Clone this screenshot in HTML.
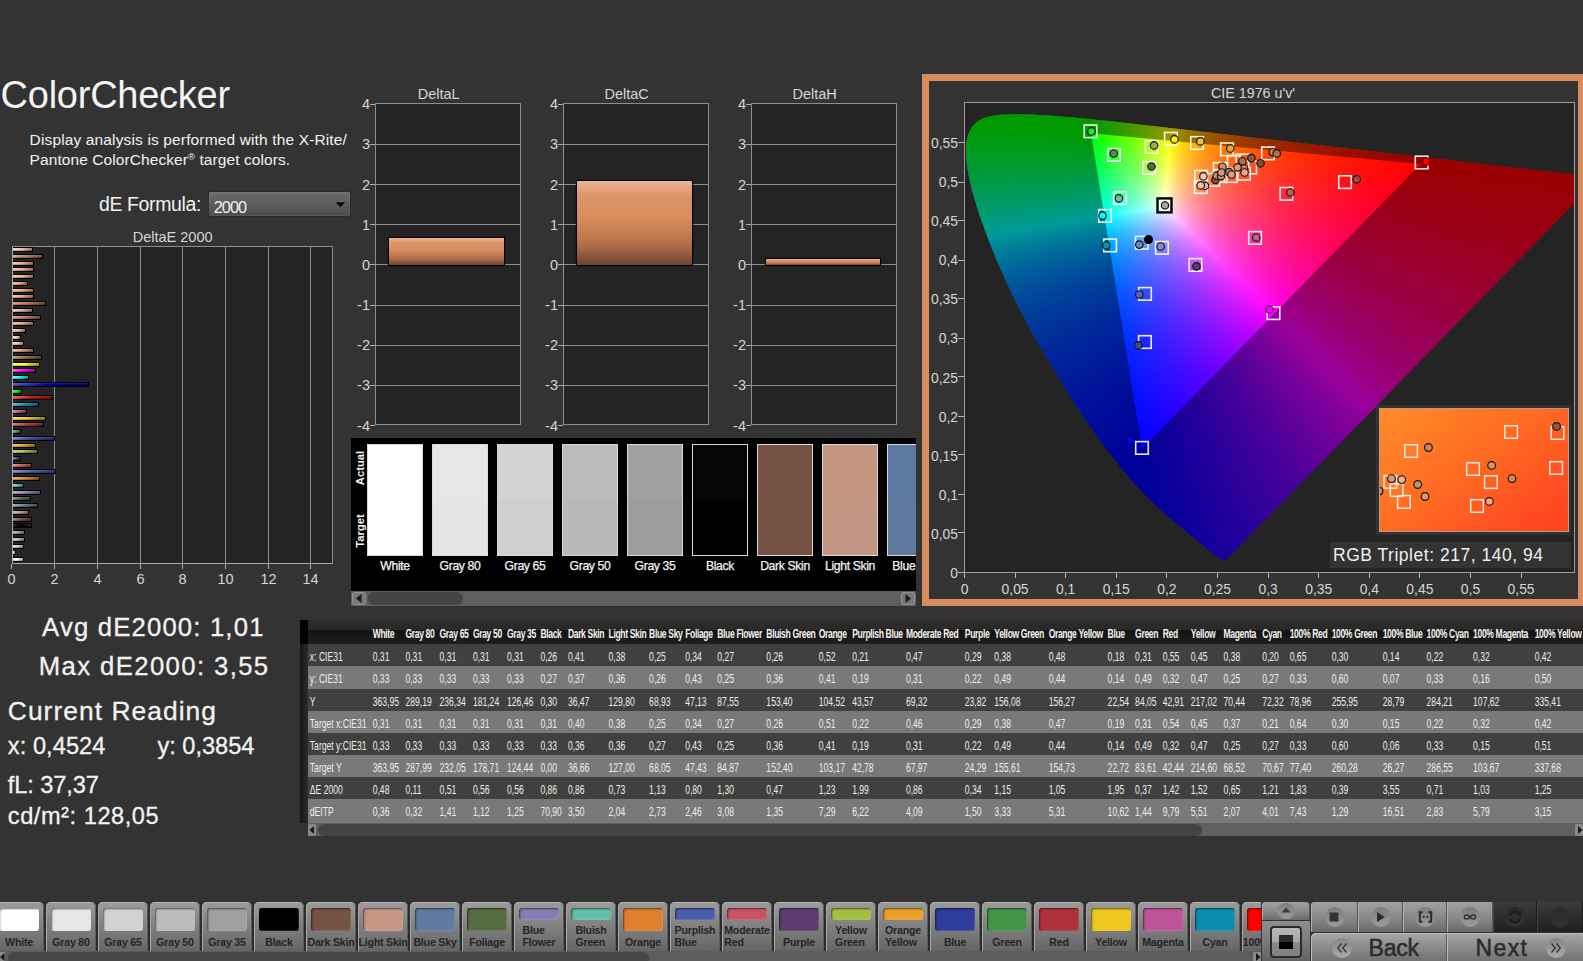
<!DOCTYPE html>
<html><head><meta charset="utf-8"><title>ColorChecker</title>
<style>
html,body{margin:0;padding:0;background:#333}
body{width:1583px;height:961px;overflow:hidden;position:relative;background:#333;font-family:"Liberation Sans",sans-serif;color:#f2f2f2}
.t{position:absolute;white-space:pre}
.b{position:absolute;box-sizing:border-box}
svg{position:absolute;overflow:visible}


.sw{position:absolute;top:6px;width:56px;height:112px;box-sizing:border-box;border:1px solid #d8d8d8}
.sw i{display:block;height:55px}
.swl{position:absolute;top:121px;width:80px;text-align:center;font-size:12.2px;line-height:14px;color:#f4f4f4;white-space:pre;letter-spacing:-.35px;-webkit-text-stroke:.25px #f4f4f4}


.cr{position:absolute;left:0;top:0;width:609px;height:469px}
.cr i{display:block;height:2px}
.ax{position:absolute;font-size:13.9px;line-height:14px;color:#d6d6d6;white-space:pre}


.tb{position:absolute;left:300px;top:620px;width:1969px;height:215px;transform:scaleX(0.655);transform-origin:0 0;font-size:13.1px;line-height:22px;color:#efefea;white-space:pre}
.tb div{position:absolute;left:0;width:100%;height:22px}
.tb span{position:absolute;top:0}
.tb .hd{height:24px;line-height:27.5px;letter-spacing:-.55px;background:linear-gradient(#2c2c2c,#292929 42%,#131313 44%,#1f1f1f);font-weight:700;color:#f4f4ee}
.tb .ra{background:#404040}.tb .rb{background:#797979}


.bs{position:absolute;left:0;top:902px;width:1261px;height:49px;overflow:hidden}
.bt{position:absolute;top:0;width:50px;height:49px;box-sizing:border-box;border-radius:5px 5px 0 0;background:linear-gradient(#9c9c9c,#8a8a8a 30%,#6e6e6e 85%,#646464);box-shadow:inset 1px 0 0 #a8a8a8,inset -1px 0 0 #5a5a5a,inset 0 1px 0 #b4b4b4}
.bt i{position:absolute;left:5px;top:6px;width:40px;height:23px;border-radius:3px;box-shadow:inset 1px 1px 2px rgba(0,0,0,.55),inset -1px -1px 1px rgba(255,255,255,.15)}
.bt i.s{height:12px}
.bt b{position:absolute;left:50%;transform:translateX(-50%);text-align:left;font-size:10.6px;line-height:12px;color:#242424;font-weight:700;letter-spacing:-.2px;white-space:pre}
.cb{position:absolute;box-sizing:border-box}
.cl{background:linear-gradient(#a2a2a2,#8c8c8c 45%,#6a6a6a);box-shadow:inset 1px 0 0 #b0b0b0,inset -1px 0 0 #555}
.cd{background:linear-gradient(#3c3c3c,#2c2c2c 50%,#202020);box-shadow:inset 1px 0 0 #444,inset -1px 0 0 #1a1a1a}
.ic{position:absolute;border-radius:50%}

</style></head><body>
<!-- left_panel -->
<div class="t" style="top:75.6px;font-size:38px;line-height:38px;color:#f4f4f4;letter-spacing:-0.25px;left:0.6px;">ColorChecker</div>
<div class="t" style="top:131.5px;font-size:15.5px;line-height:15.5px;color:#f2f2f2;letter-spacing:0.14px;left:29.6px;">Display analysis is performed with the X-Rite/</div>
<div class="t" style="top:152.2px;font-size:15.5px;line-height:15.5px;color:#f2f2f2;left:29.6px;letter-spacing:.08px;">Pantone ColorChecker<span style="font-size:9.5px;position:relative;top:-5px;letter-spacing:0">®</span> target colors.</div>
<div class="t" style="top:194.8px;font-size:19.5px;line-height:19.5px;color:#f2f2f2;letter-spacing:-0.39px;left:99.0px;">dE Formula:</div>
<div class="b" style="left:208px;top:191px;width:143px;height:26px;background:linear-gradient(#6c6c6c,#5e5e5e 45%,#4c4c4c);border:1px solid #2b2b2b;border-radius:2px;box-shadow:inset 0 0 0 1px rgba(255,255,255,.07)"></div>
<div class="t" style="top:199.3px;font-size:16.3px;line-height:16.3px;color:#f2f2f2;letter-spacing:-1.01px;left:213.8px;">2000</div>
<svg style="left:335px;top:201px" width="12" height="8"><path d="M.7 1.2h9.400L5.400 6.200z" fill="#080808"/></svg>
<div class="t" style="top:230.0px;font-size:14.5px;line-height:14.5px;color:#d6d6d6;left:-127.4px;width:600px;text-align:center;">DeltaE 2000</div>
<div class="b" style="left:12px;top:246px;width:321px;height:318px;background:#242424;border:1px solid #8e8e8e;border-bottom-color:#a8a8a8;border-left-color:#a8a8a8"></div>
<div class="b" style="left:54px;top:246px;width:1px;height:318px;background:#8e8e8e"></div>
<div class="b" style="left:97px;top:246px;width:1px;height:318px;background:#8e8e8e"></div>
<div class="b" style="left:140px;top:246px;width:1px;height:318px;background:#8e8e8e"></div>
<div class="b" style="left:182px;top:246px;width:1px;height:318px;background:#8e8e8e"></div>
<div class="b" style="left:225px;top:246px;width:1px;height:318px;background:#8e8e8e"></div>
<div class="b" style="left:268px;top:246px;width:1px;height:318px;background:#8e8e8e"></div>
<div class="b" style="left:310px;top:246px;width:1px;height:318px;background:#8e8e8e"></div>
<div class="b" style="left:11px;top:564px;width:1px;height:5px;background:#b0b0b0"></div>
<div class="t" style="top:572.3px;font-size:14.5px;line-height:14.5px;color:#d6d6d6;left:-288.5px;width:600px;text-align:center;">0</div>
<div class="b" style="left:54px;top:564px;width:1px;height:5px;background:#b0b0b0"></div>
<div class="t" style="top:572.3px;font-size:14.5px;line-height:14.5px;color:#d6d6d6;left:-245.5px;width:600px;text-align:center;">2</div>
<div class="b" style="left:97px;top:564px;width:1px;height:5px;background:#b0b0b0"></div>
<div class="t" style="top:572.3px;font-size:14.5px;line-height:14.5px;color:#d6d6d6;left:-202.5px;width:600px;text-align:center;">4</div>
<div class="b" style="left:140px;top:564px;width:1px;height:5px;background:#b0b0b0"></div>
<div class="t" style="top:572.3px;font-size:14.5px;line-height:14.5px;color:#d6d6d6;left:-159.5px;width:600px;text-align:center;">6</div>
<div class="b" style="left:182px;top:564px;width:1px;height:5px;background:#b0b0b0"></div>
<div class="t" style="top:572.3px;font-size:14.5px;line-height:14.5px;color:#d6d6d6;left:-117.5px;width:600px;text-align:center;">8</div>
<div class="b" style="left:225px;top:564px;width:1px;height:5px;background:#b0b0b0"></div>
<div class="t" style="top:572.3px;font-size:14.5px;line-height:14.5px;color:#d6d6d6;left:-74.5px;width:600px;text-align:center;">10</div>
<div class="b" style="left:268px;top:564px;width:1px;height:5px;background:#b0b0b0"></div>
<div class="t" style="top:572.3px;font-size:14.5px;line-height:14.5px;color:#d6d6d6;left:-31.5px;width:600px;text-align:center;">12</div>
<div class="b" style="left:310px;top:564px;width:1px;height:5px;background:#b0b0b0"></div>
<div class="t" style="top:572.3px;font-size:14.5px;line-height:14.5px;color:#d6d6d6;left:10.5px;width:600px;text-align:center;">14</div>
<div class="b" style="left:13px;top:247px;width:20px;height:5px;background:linear-gradient(rgba(255,255,255,.12),rgba(0,0,0,0) 50%,rgba(0,0,0,.3)),linear-gradient(90deg,#f8d3c1,#f4bca0 45%,#927160);border:1px solid #000;border-left:0"></div>
<div class="b" style="left:13px;top:254px;width:30px;height:5px;background:linear-gradient(rgba(255,255,255,.12),rgba(0,0,0,0) 50%,rgba(0,0,0,.3)),linear-gradient(90deg,#d2ac92,#b98058 45%,#6f4d35);border:1px solid #000;border-left:0"></div>
<div class="b" style="left:13px;top:261px;width:21px;height:5px;background:linear-gradient(rgba(255,255,255,.12),rgba(0,0,0,0) 50%,rgba(0,0,0,.3)),linear-gradient(90deg,#f4ccb7,#eeb090 45%,#8f6a56);border:1px solid #000;border-left:0"></div>
<div class="b" style="left:13px;top:267px;width:21px;height:5px;background:linear-gradient(rgba(255,255,255,.12),rgba(0,0,0,0) 50%,rgba(0,0,0,.3)),linear-gradient(90deg,#f1ccb8,#eab092 45%,#8c6a58);border:1px solid #000;border-left:0"></div>
<div class="b" style="left:13px;top:274px;width:21px;height:5px;background:linear-gradient(rgba(255,255,255,.12),rgba(0,0,0,0) 50%,rgba(0,0,0,.3)),linear-gradient(90deg,#f0d1bc,#e8b898 45%,#8b6e5b);border:1px solid #000;border-left:0"></div>
<div class="b" style="left:13px;top:281px;width:15px;height:5px;background:linear-gradient(rgba(255,255,255,.12),rgba(0,0,0,0) 50%,rgba(0,0,0,.3)),linear-gradient(90deg,#ffc0ab,#ff9e7e 45%,#995f4c);border:1px solid #000;border-left:0"></div>
<div class="b" style="left:13px;top:288px;width:21px;height:5px;background:linear-gradient(rgba(255,255,255,.12),rgba(0,0,0,0) 50%,rgba(0,0,0,.3)),linear-gradient(90deg,#f1c5b0,#eaa686 45%,#8c6450);border:1px solid #000;border-left:0"></div>
<div class="b" style="left:13px;top:294px;width:21px;height:5px;background:linear-gradient(rgba(255,255,255,.12),rgba(0,0,0,0) 50%,rgba(0,0,0,.3)),linear-gradient(90deg,#f7c3ab,#f2a27e 45%,#91614c);border:1px solid #000;border-left:0"></div>
<div class="b" style="left:13px;top:301px;width:33px;height:5px;background:linear-gradient(rgba(255,255,255,.12),rgba(0,0,0,0) 50%,rgba(0,0,0,.3)),linear-gradient(90deg,#d6a482,#c0733e 45%,#734525);border:1px solid #000;border-left:0"></div>
<div class="b" style="left:13px;top:308px;width:20px;height:5px;background:linear-gradient(rgba(255,255,255,.12),rgba(0,0,0,0) 50%,rgba(0,0,0,.3)),linear-gradient(90deg,#e9cebb,#ddb496 45%,#856c5a);border:1px solid #000;border-left:0"></div>
<div class="b" style="left:13px;top:315px;width:28px;height:5px;background:linear-gradient(rgba(255,255,255,.12),rgba(0,0,0,0) 50%,rgba(0,0,0,.3)),linear-gradient(90deg,#d2ac92,#b97f58 45%,#6f4c35);border:1px solid #000;border-left:0"></div>
<div class="b" style="left:13px;top:321px;width:21px;height:5px;background:linear-gradient(rgba(255,255,255,.12),rgba(0,0,0,0) 50%,rgba(0,0,0,.3)),linear-gradient(90deg,#ebc7b3,#e0a98a 45%,#866553);border:1px solid #000;border-left:0"></div>
<div class="b" style="left:13px;top:328px;width:13px;height:5px;background:linear-gradient(rgba(255,255,255,.12),rgba(0,0,0,0) 50%,rgba(0,0,0,.3)),linear-gradient(90deg,#ffd1bb,#ffb896 45%,#996e5a);border:1px solid #000;border-left:0"></div>
<div class="b" style="left:13px;top:335px;width:8px;height:5px;background:linear-gradient(rgba(255,255,255,.12),rgba(0,0,0,0) 50%,rgba(0,0,0,.3)),linear-gradient(90deg,#ffe0d1,#ffd0b8 45%,#997d6e);border:1px solid #000;border-left:0"></div>
<div class="b" style="left:13px;top:341px;width:11px;height:5px;background:linear-gradient(rgba(255,255,255,.12),rgba(0,0,0,0) 50%,rgba(0,0,0,.3)),linear-gradient(90deg,#ffdbc6,#ffc8a8 45%,#997865);border:1px solid #000;border-left:0"></div>
<div class="b" style="left:13px;top:348px;width:21px;height:5px;background:linear-gradient(rgba(255,255,255,.12),rgba(0,0,0,0) 50%,rgba(0,0,0,.3)),linear-gradient(90deg,#e6bfac,#d99c80 45%,#825e4d);border:1px solid #000;border-left:0"></div>
<div class="b" style="left:13px;top:355px;width:29px;height:5px;background:linear-gradient(rgba(255,255,255,.12),rgba(0,0,0,0) 50%,rgba(0,0,0,.3)),linear-gradient(90deg,#bd9e8b,#9a6a4c 45%,#5c402e);border:1px solid #000;border-left:0"></div>
<div class="b" style="left:13px;top:362px;width:27px;height:5px;background:linear-gradient(rgba(255,255,255,.12),rgba(0,0,0,0) 50%,rgba(0,0,0,.3)),linear-gradient(90deg,#ffff59,#ffff00 45%,#999900);border:1px solid #000;border-left:0"></div>
<div class="b" style="left:13px;top:368px;width:23px;height:5px;background:linear-gradient(rgba(255,255,255,.12),rgba(0,0,0,0) 50%,rgba(0,0,0,.3)),linear-gradient(90deg,#ff59ff,#ff00ff 45%,#990099);border:1px solid #000;border-left:0"></div>
<div class="b" style="left:13px;top:375px;width:16px;height:5px;background:linear-gradient(rgba(255,255,255,.12),rgba(0,0,0,0) 50%,rgba(0,0,0,.3)),linear-gradient(90deg,#59ffff,#00ffff 45%,#009999);border:1px solid #000;border-left:0"></div>
<div class="b" style="left:13px;top:382px;width:76px;height:5px;background:linear-gradient(rgba(255,255,255,.12),rgba(0,0,0,0) 50%,rgba(0,0,0,.3)),linear-gradient(90deg,#5959c6,#0000a8 45%,#000065);border:1px solid #000;border-left:0"></div>
<div class="b" style="left:13px;top:389px;width:9px;height:5px;background:linear-gradient(rgba(255,255,255,.12),rgba(0,0,0,0) 50%,rgba(0,0,0,.3)),linear-gradient(90deg,#59ff59,#00ff00 45%,#009900);border:1px solid #000;border-left:0"></div>
<div class="b" style="left:13px;top:395px;width:40px;height:5px;background:linear-gradient(rgba(255,255,255,.12),rgba(0,0,0,0) 50%,rgba(0,0,0,.3)),linear-gradient(90deg,#e06469,#d01018 45%,#7d0a0e);border:1px solid #000;border-left:0"></div>
<div class="b" style="left:13px;top:402px;width:26px;height:5px;background:linear-gradient(rgba(255,255,255,.12),rgba(0,0,0,0) 50%,rgba(0,0,0,.3)),linear-gradient(90deg,#60bdd1,#0a9ab8 45%,#065c6e);border:1px solid #000;border-left:0"></div>
<div class="b" style="left:13px;top:409px;width:14px;height:5px;background:linear-gradient(rgba(255,255,255,.12),rgba(0,0,0,0) 50%,rgba(0,0,0,.3)),linear-gradient(90deg,#d990bd,#c4549a 45%,#76325c);border:1px solid #000;border-left:0"></div>
<div class="b" style="left:13px;top:416px;width:33px;height:5px;background:linear-gradient(rgba(255,255,255,.12),rgba(0,0,0,0) 50%,rgba(0,0,0,.3)),linear-gradient(90deg,#f5db6e,#f0c820 45%,#907813);border:1px solid #000;border-left:0"></div>
<div class="b" style="left:13px;top:422px;width:31px;height:5px;background:linear-gradient(rgba(255,255,255,.12),rgba(0,0,0,0) 50%,rgba(0,0,0,.3)),linear-gradient(90deg,#cd7f85,#b23a44 45%,#6b2329);border:1px solid #000;border-left:0"></div>
<div class="b" style="left:13px;top:429px;width:8px;height:5px;background:linear-gradient(rgba(255,255,255,.12),rgba(0,0,0,0) 50%,rgba(0,0,0,.3)),linear-gradient(90deg,#8bbc8d,#4c9850 45%,#2e5b30);border:1px solid #000;border-left:0"></div>
<div class="b" style="left:13px;top:436px;width:42px;height:5px;background:linear-gradient(rgba(255,255,255,.12),rgba(0,0,0,0) 50%,rgba(0,0,0,.3)),linear-gradient(90deg,#7f89c1,#3a4aa0 45%,#232c60);border:1px solid #000;border-left:0"></div>
<div class="b" style="left:13px;top:443px;width:23px;height:5px;background:linear-gradient(rgba(255,255,255,.12),rgba(0,0,0,0) 50%,rgba(0,0,0,.3)),linear-gradient(90deg,#f0c473,#e8a428 45%,#8b6218);border:1px solid #000;border-left:0"></div>
<div class="b" style="left:13px;top:449px;width:25px;height:5px;background:linear-gradient(rgba(255,255,255,.12),rgba(0,0,0,0) 50%,rgba(0,0,0,.3)),linear-gradient(90deg,#c4d685,#a4c044 45%,#627329);border:1px solid #000;border-left:0"></div>
<div class="b" style="left:13px;top:456px;width:8px;height:5px;background:linear-gradient(rgba(255,255,255,.12),rgba(0,0,0,0) 50%,rgba(0,0,0,.3)),linear-gradient(90deg,#9580a2,#5c3c70 45%,#372443);border:1px solid #000;border-left:0"></div>
<div class="b" style="left:13px;top:463px;width:19px;height:5px;background:linear-gradient(rgba(255,255,255,.12),rgba(0,0,0,0) 50%,rgba(0,0,0,.3)),linear-gradient(90deg,#de929c,#cc5866 45%,#7a353d);border:1px solid #000;border-left:0"></div>
<div class="b" style="left:13px;top:469px;width:43px;height:5px;background:linear-gradient(rgba(255,255,255,.12),rgba(0,0,0,0) 50%,rgba(0,0,0,.3)),linear-gradient(90deg,#8994c6,#4a5aa8 45%,#2c3665);border:1px solid #000;border-left:0"></div>
<div class="b" style="left:13px;top:476px;width:27px;height:5px;background:linear-gradient(rgba(255,255,255,.12),rgba(0,0,0,0) 50%,rgba(0,0,0,.3)),linear-gradient(90deg,#ebac78,#e08030 45%,#864d1d);border:1px solid #000;border-left:0"></div>
<div class="b" style="left:13px;top:483px;width:11px;height:5px;background:linear-gradient(rgba(255,255,255,.12),rgba(0,0,0,0) 50%,rgba(0,0,0,.3)),linear-gradient(90deg,#99d6c8,#62c0aa 45%,#3b7366);border:1px solid #000;border-left:0"></div>
<div class="b" style="left:13px;top:490px;width:28px;height:5px;background:linear-gradient(rgba(255,255,255,.12),rgba(0,0,0,0) 50%,rgba(0,0,0,.3)),linear-gradient(90deg,#b3afd1,#8a84b8 45%,#534f6e);border:1px solid #000;border-left:0"></div>
<div class="b" style="left:13px;top:496px;width:18px;height:5px;background:linear-gradient(rgba(255,255,255,.12),rgba(0,0,0,0) 50%,rgba(0,0,0,.3)),linear-gradient(90deg,#91a185,#566e44 45%,#344229);border:1px solid #000;border-left:0"></div>
<div class="b" style="left:13px;top:503px;width:25px;height:5px;background:linear-gradient(rgba(255,255,255,.12),rgba(0,0,0,0) 50%,rgba(0,0,0,.3)),linear-gradient(90deg,#97a9c0,#5f7a9e 45%,#39495f);border:1px solid #000;border-left:0"></div>
<div class="b" style="left:13px;top:510px;width:16px;height:5px;background:linear-gradient(rgba(255,255,255,.12),rgba(0,0,0,0) 50%,rgba(0,0,0,.3)),linear-gradient(90deg,#dabbae,#c69682 45%,#775a4e);border:1px solid #000;border-left:0"></div>
<div class="b" style="left:13px;top:517px;width:19px;height:5px;background:linear-gradient(rgba(255,255,255,.12),rgba(0,0,0,0) 50%,rgba(0,0,0,.3)),linear-gradient(90deg,#a58d82,#74503f 45%,#463026);border:1px solid #000;border-left:0"></div>
<div class="b" style="left:13px;top:523px;width:19px;height:5px;background:linear-gradient(rgba(255,255,255,.12),rgba(0,0,0,0) 50%,rgba(0,0,0,.3)),linear-gradient(90deg,#2a2a2a,#000 30%,#1a1a1a);border:1px solid #000;border-left:0"></div>
<div class="b" style="left:13px;top:530px;width:12px;height:5px;background:linear-gradient(rgba(255,255,255,.12),rgba(0,0,0,0) 50%,rgba(0,0,0,.3)),linear-gradient(90deg,#c1c1c1,#a0a0a0 45%,#606060);border:1px solid #000;border-left:0"></div>
<div class="b" style="left:13px;top:537px;width:12px;height:5px;background:linear-gradient(rgba(255,255,255,.12),rgba(0,0,0,0) 50%,rgba(0,0,0,.3)),linear-gradient(90deg,#d2d2d2,#bababa 45%,#707070);border:1px solid #000;border-left:0"></div>
<div class="b" style="left:13px;top:544px;width:11px;height:5px;background:linear-gradient(rgba(255,255,255,.12),rgba(0,0,0,0) 50%,rgba(0,0,0,.3)),linear-gradient(90deg,#e2e2e2,#d2d2d2 45%,#7e7e7e);border:1px solid #000;border-left:0"></div>
<div class="b" style="left:13px;top:550px;width:3px;height:5px;background:linear-gradient(rgba(255,255,255,.12),rgba(0,0,0,0) 50%,rgba(0,0,0,.3)),linear-gradient(90deg,#efefef,#e6e6e6 45%,#8a8a8a);border:1px solid #000;border-left:0"></div>
<div class="b" style="left:13px;top:557px;width:11px;height:5px;background:linear-gradient(rgba(255,255,255,.12),rgba(0,0,0,0) 50%,rgba(0,0,0,.3)),linear-gradient(90deg,#ffffff,#ffffff 45%,#999999);border:1px solid #000;border-left:0"></div>
<div class="t" style="top:615.0px;font-size:25.7px;line-height:25.7px;color:#f2f2f2;letter-spacing:1.17px;left:42.1px;-webkit-text-stroke:.3px #f2f2f2;">Avg dE2000: 1,01</div>
<div class="t" style="top:654.1px;font-size:25.7px;line-height:25.7px;color:#f2f2f2;letter-spacing:1.39px;left:38.8px;-webkit-text-stroke:.3px #f2f2f2;">Max dE2000: 3,55</div>
<div class="t" style="top:698.1px;font-size:26.4px;line-height:26.4px;color:#f2f2f2;letter-spacing:1.04px;left:7.8px;-webkit-text-stroke:.3px #f2f2f2;">Current Reading</div>
<div class="t" style="top:734.6px;font-size:23.6px;line-height:23.6px;color:#f2f2f2;letter-spacing:0.07px;left:7.8px;-webkit-text-stroke:.3px #f2f2f2;">x: 0,4524</div>
<div class="t" style="top:734.6px;font-size:23.6px;line-height:23.6px;color:#f2f2f2;left:157.4px;-webkit-text-stroke:.3px #f2f2f2;">y: 0,3854</div>
<div class="t" style="top:773.6px;font-size:23.6px;line-height:23.6px;color:#f2f2f2;letter-spacing:-0.09px;left:7.8px;-webkit-text-stroke:.3px #f2f2f2;">fL: 37,37</div>
<div class="t" style="top:805.4px;font-size:23.6px;line-height:23.6px;color:#f2f2f2;letter-spacing:0.55px;left:7.8px;-webkit-text-stroke:.3px #f2f2f2;">cd/m²: 128,05</div>
<!-- mid_panel -->
<div class="t" style="top:87.1px;font-size:14.5px;line-height:14.5px;color:#d6d6d6;left:138.7px;width:600px;text-align:center;">DeltaL</div>
<div class="b" style="left:375px;top:103px;width:146px;height:322px;background:#242424;border:1px solid #8e8e8e"></div>
<div class="b" style="left:370px;top:425px;width:5px;height:1px;background:#b0b0b0"></div>
<div class="t" style="top:418.5px;font-size:14.5px;line-height:14.5px;color:#d6d6d6;left:-230.0px;width:600px;text-align:right;">-4</div>
<div class="b" style="left:375px;top:385px;width:146px;height:1px;background:#8e8e8e"></div>
<div class="b" style="left:370px;top:385px;width:5px;height:1px;background:#b0b0b0"></div>
<div class="t" style="top:378.3px;font-size:14.5px;line-height:14.5px;color:#d6d6d6;left:-230.0px;width:600px;text-align:right;">-3</div>
<div class="b" style="left:375px;top:345px;width:146px;height:1px;background:#8e8e8e"></div>
<div class="b" style="left:370px;top:345px;width:5px;height:1px;background:#b0b0b0"></div>
<div class="t" style="top:338.1px;font-size:14.5px;line-height:14.5px;color:#d6d6d6;left:-230.0px;width:600px;text-align:right;">-2</div>
<div class="b" style="left:375px;top:305px;width:146px;height:1px;background:#8e8e8e"></div>
<div class="b" style="left:370px;top:305px;width:5px;height:1px;background:#b0b0b0"></div>
<div class="t" style="top:298.0px;font-size:14.5px;line-height:14.5px;color:#d6d6d6;left:-230.0px;width:600px;text-align:right;">-1</div>
<div class="b" style="left:375px;top:264px;width:146px;height:1px;background:#8e8e8e"></div>
<div class="b" style="left:370px;top:264px;width:5px;height:1px;background:#b0b0b0"></div>
<div class="t" style="top:257.8px;font-size:14.5px;line-height:14.5px;color:#d6d6d6;left:-230.0px;width:600px;text-align:right;">0</div>
<div class="b" style="left:375px;top:224px;width:146px;height:1px;background:#8e8e8e"></div>
<div class="b" style="left:370px;top:224px;width:5px;height:1px;background:#b0b0b0"></div>
<div class="t" style="top:217.7px;font-size:14.5px;line-height:14.5px;color:#d6d6d6;left:-230.0px;width:600px;text-align:right;">1</div>
<div class="b" style="left:375px;top:184px;width:146px;height:1px;background:#8e8e8e"></div>
<div class="b" style="left:370px;top:184px;width:5px;height:1px;background:#b0b0b0"></div>
<div class="t" style="top:177.5px;font-size:14.5px;line-height:14.5px;color:#d6d6d6;left:-230.0px;width:600px;text-align:right;">2</div>
<div class="b" style="left:375px;top:144px;width:146px;height:1px;background:#8e8e8e"></div>
<div class="b" style="left:370px;top:144px;width:5px;height:1px;background:#b0b0b0"></div>
<div class="t" style="top:137.3px;font-size:14.5px;line-height:14.5px;color:#d6d6d6;left:-230.0px;width:600px;text-align:right;">3</div>
<div class="b" style="left:370px;top:104px;width:5px;height:1px;background:#b0b0b0"></div>
<div class="t" style="top:97.2px;font-size:14.5px;line-height:14.5px;color:#d6d6d6;left:-230.0px;width:600px;text-align:right;">4</div>
<div class="b" style="left:388px;top:237px;width:117px;height:29px;background:linear-gradient(#eab496,#dd9468 18%,#d98c5e 45%,#b4704a 75%,#6c4434);border:1px solid #000;box-shadow:0 0 1px #000"></div>
<div class="t" style="top:87.1px;font-size:14.5px;line-height:14.5px;color:#d6d6d6;left:326.7px;width:600px;text-align:center;">DeltaC</div>
<div class="b" style="left:563px;top:103px;width:146px;height:322px;background:#242424;border:1px solid #8e8e8e"></div>
<div class="b" style="left:558px;top:425px;width:5px;height:1px;background:#b0b0b0"></div>
<div class="t" style="top:418.5px;font-size:14.5px;line-height:14.5px;color:#d6d6d6;left:-42.0px;width:600px;text-align:right;">-4</div>
<div class="b" style="left:563px;top:385px;width:146px;height:1px;background:#8e8e8e"></div>
<div class="b" style="left:558px;top:385px;width:5px;height:1px;background:#b0b0b0"></div>
<div class="t" style="top:378.3px;font-size:14.5px;line-height:14.5px;color:#d6d6d6;left:-42.0px;width:600px;text-align:right;">-3</div>
<div class="b" style="left:563px;top:345px;width:146px;height:1px;background:#8e8e8e"></div>
<div class="b" style="left:558px;top:345px;width:5px;height:1px;background:#b0b0b0"></div>
<div class="t" style="top:338.1px;font-size:14.5px;line-height:14.5px;color:#d6d6d6;left:-42.0px;width:600px;text-align:right;">-2</div>
<div class="b" style="left:563px;top:305px;width:146px;height:1px;background:#8e8e8e"></div>
<div class="b" style="left:558px;top:305px;width:5px;height:1px;background:#b0b0b0"></div>
<div class="t" style="top:298.0px;font-size:14.5px;line-height:14.5px;color:#d6d6d6;left:-42.0px;width:600px;text-align:right;">-1</div>
<div class="b" style="left:563px;top:264px;width:146px;height:1px;background:#8e8e8e"></div>
<div class="b" style="left:558px;top:264px;width:5px;height:1px;background:#b0b0b0"></div>
<div class="t" style="top:257.8px;font-size:14.5px;line-height:14.5px;color:#d6d6d6;left:-42.0px;width:600px;text-align:right;">0</div>
<div class="b" style="left:563px;top:224px;width:146px;height:1px;background:#8e8e8e"></div>
<div class="b" style="left:558px;top:224px;width:5px;height:1px;background:#b0b0b0"></div>
<div class="t" style="top:217.7px;font-size:14.5px;line-height:14.5px;color:#d6d6d6;left:-42.0px;width:600px;text-align:right;">1</div>
<div class="b" style="left:563px;top:184px;width:146px;height:1px;background:#8e8e8e"></div>
<div class="b" style="left:558px;top:184px;width:5px;height:1px;background:#b0b0b0"></div>
<div class="t" style="top:177.5px;font-size:14.5px;line-height:14.5px;color:#d6d6d6;left:-42.0px;width:600px;text-align:right;">2</div>
<div class="b" style="left:563px;top:144px;width:146px;height:1px;background:#8e8e8e"></div>
<div class="b" style="left:558px;top:144px;width:5px;height:1px;background:#b0b0b0"></div>
<div class="t" style="top:137.3px;font-size:14.5px;line-height:14.5px;color:#d6d6d6;left:-42.0px;width:600px;text-align:right;">3</div>
<div class="b" style="left:558px;top:104px;width:5px;height:1px;background:#b0b0b0"></div>
<div class="t" style="top:97.2px;font-size:14.5px;line-height:14.5px;color:#d6d6d6;left:-42.0px;width:600px;text-align:right;">4</div>
<div class="b" style="left:576px;top:180px;width:117px;height:86px;background:linear-gradient(#eab496,#dd9468 18%,#d98c5e 45%,#b4704a 75%,#6c4434);border:1px solid #000;box-shadow:0 0 1px #000"></div>
<div class="t" style="top:87.1px;font-size:14.5px;line-height:14.5px;color:#d6d6d6;left:514.7px;width:600px;text-align:center;">DeltaH</div>
<div class="b" style="left:751px;top:103px;width:146px;height:322px;background:#242424;border:1px solid #8e8e8e"></div>
<div class="b" style="left:746px;top:425px;width:5px;height:1px;background:#b0b0b0"></div>
<div class="t" style="top:418.5px;font-size:14.5px;line-height:14.5px;color:#d6d6d6;left:146.0px;width:600px;text-align:right;">-4</div>
<div class="b" style="left:751px;top:385px;width:146px;height:1px;background:#8e8e8e"></div>
<div class="b" style="left:746px;top:385px;width:5px;height:1px;background:#b0b0b0"></div>
<div class="t" style="top:378.3px;font-size:14.5px;line-height:14.5px;color:#d6d6d6;left:146.0px;width:600px;text-align:right;">-3</div>
<div class="b" style="left:751px;top:345px;width:146px;height:1px;background:#8e8e8e"></div>
<div class="b" style="left:746px;top:345px;width:5px;height:1px;background:#b0b0b0"></div>
<div class="t" style="top:338.1px;font-size:14.5px;line-height:14.5px;color:#d6d6d6;left:146.0px;width:600px;text-align:right;">-2</div>
<div class="b" style="left:751px;top:305px;width:146px;height:1px;background:#8e8e8e"></div>
<div class="b" style="left:746px;top:305px;width:5px;height:1px;background:#b0b0b0"></div>
<div class="t" style="top:298.0px;font-size:14.5px;line-height:14.5px;color:#d6d6d6;left:146.0px;width:600px;text-align:right;">-1</div>
<div class="b" style="left:751px;top:264px;width:146px;height:1px;background:#8e8e8e"></div>
<div class="b" style="left:746px;top:264px;width:5px;height:1px;background:#b0b0b0"></div>
<div class="t" style="top:257.8px;font-size:14.5px;line-height:14.5px;color:#d6d6d6;left:146.0px;width:600px;text-align:right;">0</div>
<div class="b" style="left:751px;top:224px;width:146px;height:1px;background:#8e8e8e"></div>
<div class="b" style="left:746px;top:224px;width:5px;height:1px;background:#b0b0b0"></div>
<div class="t" style="top:217.7px;font-size:14.5px;line-height:14.5px;color:#d6d6d6;left:146.0px;width:600px;text-align:right;">1</div>
<div class="b" style="left:751px;top:184px;width:146px;height:1px;background:#8e8e8e"></div>
<div class="b" style="left:746px;top:184px;width:5px;height:1px;background:#b0b0b0"></div>
<div class="t" style="top:177.5px;font-size:14.5px;line-height:14.5px;color:#d6d6d6;left:146.0px;width:600px;text-align:right;">2</div>
<div class="b" style="left:751px;top:144px;width:146px;height:1px;background:#8e8e8e"></div>
<div class="b" style="left:746px;top:144px;width:5px;height:1px;background:#b0b0b0"></div>
<div class="t" style="top:137.3px;font-size:14.5px;line-height:14.5px;color:#d6d6d6;left:146.0px;width:600px;text-align:right;">3</div>
<div class="b" style="left:746px;top:104px;width:5px;height:1px;background:#b0b0b0"></div>
<div class="t" style="top:97.2px;font-size:14.5px;line-height:14.5px;color:#d6d6d6;left:146.0px;width:600px;text-align:right;">4</div>
<div class="b" style="left:765px;top:258px;width:116px;height:8px;background:linear-gradient(#eab496,#dd9468 18%,#d98c5e 45%,#b4704a 75%,#6c4434);border:1px solid #000;box-shadow:0 0 1px #000"></div>
<div class="b" style="left:351px;top:438px;width:565px;height:153px;background:#000;overflow:hidden"><div class="sw" style="left:16px"><i style="background:#ffffff"></i><i style="background:#ffffff"></i></div><div class="swl" style="left:4px">White</div><div class="sw" style="left:81px"><i style="background:#e7e5e6"></i><i style="background:#e4e4e4"></i></div><div class="swl" style="left:69px">Gray 80</div><div class="sw" style="left:146px"><i style="background:#d3d3d4"></i><i style="background:#cfcfcf"></i></div><div class="swl" style="left:134px">Gray 65</div><div class="sw" style="left:211px"><i style="background:#bbbbbd"></i><i style="background:#b8b8b8"></i></div><div class="swl" style="left:199px">Gray 50</div><div class="sw" style="left:276px"><i style="background:#a1a1a2"></i><i style="background:#9d9d9d"></i></div><div class="swl" style="left:264px">Gray 35</div><div class="sw" style="left:341px"><i style="background:#040506"></i><i style="background:#000000"></i></div><div class="swl" style="left:329px">Black</div><div class="sw" style="left:406px"><i style="background:#745143"></i><i style="background:#735244"></i></div><div class="swl" style="left:394px">Dark Skin</div><div class="sw" style="left:471px"><i style="background:#c4957f"></i><i style="background:#c29682"></i></div><div class="swl" style="left:459px">Light Skin</div><div class="sw" style="left:536px"><i style="background:#5c7a9f"></i><i style="background:#5f7a9e"></i></div><div class="swl" style="left:524px">Blue Sky</div><div class="t" style="left:-21.5px;top:23.2px;width:60px;height:14px;line-height:14px;font-size:11.3px;font-weight:700;text-align:center;transform:rotate(-90deg);color:#f4f4f4">Actual</div><div class="t" style="left:-21.5px;top:86px;width:60px;height:14px;line-height:14px;font-size:11.3px;font-weight:700;text-align:center;transform:rotate(-90deg);color:#f4f4f4">Target</div></div>
<div class="b" style="left:351px;top:591px;width:565px;height:15px;background:#5f5f5f"><div class="b" style="left:0.5px;top:1px;width:14px;height:13px;background:#787878;border:1px solid #949494;border-radius:2.5px"></div><svg style="left:4px;top:3px" width="8" height="9"><path d="M6.500 0v9L1 4.500z" fill="#1c1c1c"/></svg><div class="b" style="left:549.5px;top:1px;width:14px;height:13px;background:#787878;border:1px solid #949494;border-radius:2.5px"></div><svg style="left:553px;top:3px" width="8" height="9"><path d="M1.500 0v9L7 4.500z" fill="#1c1c1c"/></svg><div class="b" style="left:17.4px;top:1.4px;width:95px;height:12.200px;background:#454545;border-radius:6.100px"></div></div>
<!-- cie_panel -->
<div class="b" style="left:922px;top:74px;width:663px;height:532px;border:7px solid #d98c5e;background:#333"></div>
<div class="t" style="top:85.9px;font-size:14.3px;line-height:14.3px;color:#d6d6d6;left:953.0px;width:600px;text-align:center;">CIE 1976 u'v'</div>
<div class="b" style="left:964px;top:102px;width:611px;height:471px;background:#242424;border:1px solid #9c9c9c"></div>
<div class="b" style="left:965px;top:103px;width:609px;height:469px;overflow:hidden"><div class="cr" style="clip-path:polygon(261.4px 456.4px,256.7px 456.6px,254.3px 455.6px,252.1px 454.1px,250.1px 452.6px,247.6px 450.7px,245.7px 449.1px,243.5px 447.3px,241.1px 445.3px,238.5px 443.0px,235.6px 440.5px,232.4px 437.9px,230.7px 436.5px,228.9px 434.9px,226.9px 433.3px,224.9px 431.7px,222.8px 429.9px,220.5px 428.0px,218.2px 426.1px,215.8px 424.1px,213.3px 422.1px,210.7px 419.9px,208.0px 417.7px,205.2px 415.3px,202.3px 412.7px,199.2px 410.0px,196.1px 407.2px,192.8px 404.2px,189.4px 401.0px,185.9px 397.7px,182.4px 394.2px,178.6px 390.4px,174.7px 386.3px,170.5px 381.7px,166.0px 376.7px,161.2px 371.0px,156.2px 364.9px,150.8px 358.3px,145.3px 351.2px,139.7px 343.8px,133.8px 335.9px,127.9px 327.5px,121.8px 318.8px,115.5px 309.5px,109.2px 299.8px,102.8px 289.8px,96.3px 279.3px,89.8px 268.6px,83.3px 257.8px,76.8px 246.7px,70.5px 235.5px,64.2px 224.3px,58.1px 213.0px,52.3px 201.7px,46.8px 190.5px,41.6px 179.5px,36.8px 168.7px,32.2px 158.2px,28.0px 147.9px,24.0px 138.0px,20.4px 128.4px,17.1px 119.3px,14.1px 110.7px,11.5px 102.5px,9.2px 94.9px,7.2px 87.7px,5.5px 81.0px,4.1px 74.7px,3.0px 68.8px,2.1px 63.4px,1.5px 58.3px,1.1px 53.6px,0.9px 49.3px,0.9px 45.3px,1.2px 41.6px,1.6px 38.1px,2.3px 34.9px,3.1px 31.9px,4.2px 29.2px,5.4px 26.7px,6.8px 24.4px,8.4px 22.4px,10.1px 20.6px,11.9px 19.0px,13.9px 17.6px,16.0px 16.4px,18.2px 15.3px,20.5px 14.5px,22.9px 13.7px,25.4px 13.2px,27.9px 12.7px,33.2px 12.0px,38.7px 11.6px,44.4px 11.4px,50.2px 11.3px,55.9px 11.3px,61.7px 11.4px,64.6px 11.5px,67.5px 11.6px,70.5px 11.7px,73.5px 11.9px,76.6px 12.0px,79.7px 12.2px,82.8px 12.4px,86.0px 12.6px,89.3px 12.9px,92.6px 13.1px,95.9px 13.4px,99.3px 13.7px,102.8px 14.0px,106.3px 14.3px,109.9px 14.6px,113.6px 15.0px,117.3px 15.3px,121.1px 15.7px,125.0px 16.1px,128.9px 16.5px,133.0px 17.0px,137.1px 17.4px,141.3px 17.8px,145.6px 18.3px,150.0px 18.8px,154.4px 19.3px,159.0px 19.8px,163.7px 20.3px,168.4px 20.8px,173.3px 21.4px,178.2px 21.9px,183.3px 22.5px,188.4px 23.1px,193.7px 23.7px,199.0px 24.3px,204.5px 24.9px,210.1px 25.5px,215.8px 26.2px,221.5px 26.8px,227.4px 27.5px,233.4px 28.2px,239.5px 28.9px,245.7px 29.6px,252.1px 30.4px,258.5px 31.1px,265.0px 31.9px,271.6px 32.6px,278.3px 33.4px,285.1px 34.2px,292.0px 35.0px,299.0px 35.8px,306.0px 36.6px,313.2px 37.4px,320.4px 38.2px,327.6px 39.1px,335.0px 39.9px,342.3px 40.8px,349.8px 41.6px,357.2px 42.5px,364.6px 43.3px,372.0px 44.2px,379.3px 45.0px,386.5px 45.9px,393.6px 46.7px,400.8px 47.5px,407.9px 48.3px,415.0px 49.1px,422.0px 49.9px,429.0px 50.8px,436.0px 51.6px,442.7px 52.3px,449.3px 53.1px,455.8px 53.8px,462.1px 54.5px,468.2px 55.3px,474.3px 55.9px,480.1px 56.6px,485.9px 57.3px,491.5px 57.9px,496.9px 58.6px,502.2px 59.2px,507.3px 59.7px,512.2px 60.3px,516.9px 60.9px,521.5px 61.4px,526.0px 61.9px,530.2px 62.4px,534.4px 62.9px,538.3px 63.3px,542.2px 63.8px,545.9px 64.2px,549.5px 64.6px,552.9px 65.0px,556.3px 65.4px,559.5px 65.8px,562.7px 66.1px,565.7px 66.5px,568.8px 66.8px,571.7px 67.2px,574.5px 67.5px,577.2px 67.8px,582.4px 68.4px,587.2px 69.0px,591.7px 69.5px,595.8px 70.0px,599.6px 70.4px,602.9px 70.8px,605.8px 71.1px,609.7px 71.6px,613.1px 71.9px,616.0px 72.3px,619.0px 72.6px,622.1px 73.0px,625.0px 73.3px,628.0px 73.7px,634.9px 73.9px)"><i></i><i></i><i></i><i></i><i></i><i style="background:linear-gradient(90deg,#00ff00 33px,#00ff00 76px)"></i><i style="background:linear-gradient(90deg,#00ff00 21px,#00ff00 103px)"></i><i style="background:linear-gradient(90deg,#00ff00 15px,#01ff00 124px)"></i><i style="background:linear-gradient(90deg,#00ff00 12px,#00ff00 124px,#30ff00 143px)"></i><i style="background:linear-gradient(90deg,#00ff00 9px,#00ff00 124px,#2fff00 143px,#64ff00 162px)"></i><i style="background:linear-gradient(90deg,#00ff03 7px,#00ff00 28px,#00ff00 124px,#47ff00 152px,#9cff00 180px)"></i><i style="background:linear-gradient(90deg,#00ff07 6px,#00ff00 49px,#00ff00 125px,#33ff00 145px,#66ff00 163px,#9cff00 180px,#d7ff00 197px)"></i><i style="background:linear-gradient(90deg,#00ff0a 4px,#00ff00 70px,#00ff00 125px,#38ff00 147px,#75ff00 168px,#b7ff00 188px,#ffff00 207px,#ffe200 215px)"></i><i style="background:linear-gradient(90deg,#00ff0e 3px,#00ff00 91px,#00ff00 125px,#32ff00 145px,#75ff00 168px,#b8ff00 188px,#ffff00 207px,#ffd400 219px,#ffb200 232px)"></i><i style="background:linear-gradient(90deg,#00ff12 2px,#00ff00 126px,#3aff00 148px,#75ff00 168px,#b4ff00 187px,#fffe00 207px,#ffdd00 216px,#ffc000 226px,#ffa500 237px,#ff8c00 250px)"></i><i style="background:linear-gradient(90deg,#00ff15 2px,#00ff02 126px,#37ff00 147px,#75ff00 168px,#b1ff00 186px,#fffd00 207px,#ffd300 219px,#ffae00 233px,#ff8d00 249px,#ff7200 267px)"></i><i style="background:linear-gradient(90deg,#00ff19 1px,#00ff06 126px,#33ff02 146px,#75ff00 168px,#b8ff00 188px,#feff00 206px,#ffc900 222px,#ffa000 239px,#ff7b00 260px,#ff5d00 284px)"></i><i style="background:linear-gradient(90deg,#00ff1c 1px,#01ff0b 127px,#3bff06 149px,#78ff02 169px,#b9ff00 188px,#feff00 206px,#ffde00 215px,#ffc300 224px,#ffaa00 234px,#ff9300 245px,#ff6b00 271px,#ff4b00 302px)"></i><i style="background:linear-gradient(90deg,#00ff20 0px,#00ff10 127px,#38ff0c 148px,#77ff07 169px,#b9ff03 188px,#ffff00 206px,#ffdd00 215px,#ffbc00 226px,#ffa200 237px,#ff8900 250px,#ff7200 265px,#ff5f00 281px,#ff3d00 319px)"></i><i style="background:linear-gradient(90deg,#00ff23 0px,#00ff14 127px,#34ff11 147px,#74ff0d 168px,#b5ff09 187px,#fcff04 205px,#fffe04 206px,#ffd300 218px,#ffb400 229px,#ff9700 242px,#ff7f00 256px,#ff6800 272px,#ff5400 291px,#ff3200 336px)"></i><i style="background:linear-gradient(90deg,#00ff27 0px,#01ff19 128px,#3aff16 149px,#77ff12 169px,#b9ff0e 188px,#fdff0a 205px,#fffd0a 206px,#ffd206 218px,#ffb102 230px,#ff9200 244px,#ff7600 261px,#ff5e00 280px,#ff4a00 301px,#ff3700 326px,#ff2700 354px)"></i><i style="background:linear-gradient(90deg,#00ff2b 0px,#00ff1e 128px,#39ff1b 149px,#77ff18 169px,#baff14 188px,#fdff10 205px,#ffd10b 218px,#ffad07 231px,#ff8c03 247px,#ff7000 265px,#ff5700 286px,#ff4200 310px,#ff2f00 338px,#ff1f00 371px)"></i><i style="background:linear-gradient(90deg,#00ff2e -1px,#00ff23 128px,#33ff20 147px,#73ff1d 168px,#b6ff1a 187px,#feff17 205px,#ffd010 218px,#ffa80b 233px,#ff8606 250px,#ff6902 270px,#ff5000 293px,#ff3a00 320px,#ff2800 351px,#ff1800 388px)"></i><i style="background:linear-gradient(90deg,#00ff32 -1px,#01ff28 129px,#3bff25 150px,#76ff23 169px,#baff20 188px,#ffff1d 205px,#ffcf16 218px,#ffa50f 234px,#ff8209 252px,#ff6305 274px,#ff4a01 299px,#ff3400 329px,#ff2100 364px,#ff1100 406px)"></i><i style="background:linear-gradient(90deg,#00ff36 -1px,#00ff2d 129px,#3aff2b 150px,#76ff28 169px,#b7ff26 187px,#fffe23 205px,#ffcb1a 219px,#ffa113 235px,#ff7c0d 255px,#ff5e07 278px,#ff4403 305px,#ff2e00 338px,#ff1b00 377px,#ff0b00 423px)"></i><i style="background:linear-gradient(90deg,#00ff39 -1px,#00ff32 129px,#34ff30 148px,#73ff2e 168px,#b3ff2c 186px,#fffd2a 205px,#ffe224 212px,#ffc71f 220px,#ff9c17 237px,#ff770f 258px,#ff5709 283px,#ff3d04 313px,#ff2800 348px,#ff1500 390px,#ff0600 440px)"></i><i style="background:linear-gradient(90deg,#00ff3d 0px,#01ff37 130px,#39ff36 150px,#76ff34 169px,#afff33 185px,#fdff31 204px,#fffd30 205px,#ffe12a 212px,#ffc625 220px,#ffae1f 229px,#ff971a 239px,#ff7212 261px,#ff530c 287px,#ff3806 319px,#ff2301 357px,#ff1000 403px,#ff0100 458px)"></i><i style="background:linear-gradient(90deg,#00ff41 0px,#00ff3c 130px,#39ff3b 150px,#72ff3a 168px,#acff39 184px,#feff38 204px,#fffc37 205px,#ffdc2f 213px,#ffc329 221px,#ff941e 240px,#ff6e15 263px,#ff4d0d 292px,#ff3207 328px,#ff1c02 371px,#ff0700 433px,#ff0000 475px)"></i><i style="background:linear-gradient(90deg,#00ff45 0px,#00ff42 130px,#35ff41 149px,#76ff40 169px,#b8ff3f 187px,#ffff3e 204px,#ffdf36 212px,#ffc22f 221px,#ffa728 231px,#ff9122 241px,#ff6918 266px,#ff490f 296px,#ff2c08 337px,#ff1502 387px,#ff0000 459px,#ff0000 493px)"></i><i style="background:linear-gradient(90deg,#00ff49 0px,#01ff47 131px,#3bff47 151px,#79ff46 170px,#b8ff46 187px,#ffff45 204px,#ffde3c 212px,#ffc134 221px,#ffa62d 231px,#ff8f26 242px,#ff661b 268px,#ff4411 301px,#ff2609 346px,#ff0f02 403px,#ff0000 458px,#ff0000 510px)"></i><i style="background:linear-gradient(90deg,#00ff4d 0px,#00ff4d 131px,#3aff4d 151px,#75ff4d 169px,#b4ff4c 186px,#fffe4c 204px,#ffda41 213px,#ffbd39 222px,#ffa331 232px,#ff8a29 244px,#ff611d 271px,#ff4013 305px,#ff210a 355px,#ff0903 419px,#ff0000 456px,#ff0000 527px)"></i><i style="background:linear-gradient(90deg,#00ff51 0px,#00ff52 131px,#33ff52 149px,#71ff53 168px,#b1ff53 185px,#fffd53 204px,#ffd947 213px,#ffbc3e 222px,#ffa035 233px,#ff872d 245px,#ff7026 259px,#ff5d1f 274px,#ff3b15 310px,#ff1c0a 365px,#ff0403 438px,#ff0001 454px,#ff0000 545px)"></i><i style="background:linear-gradient(90deg,#00ff55 1px,#01ff58 132px,#39ff58 151px,#75ff59 169px,#adff5a 184px,#fdff5b 203px,#fffc5a 204px,#ffd84d 213px,#ffb843 223px,#ff9d39 234px,#ff8330 247px,#ff6d28 261px,#ff5922 277px,#ff3716 315px,#ff180b 374px,#ff0003 451px,#ff0000 562px)"></i><i style="background:linear-gradient(90deg,#00ff59 1px,#00ff5d 132px,#38ff5f 151px,#71ff60 168px,#b5ff61 186px,#feff62 203px,#fffb61 204px,#ffd754 213px,#ffb748 223px,#ff993d 235px,#ff8034 248px,#ff692b 263px,#ff5624 279px,#ff3318 319px,#ff160d 376px,#ff0005 450px,#ff0000 518px,#ff0000 580px)"></i><i style="background:linear-gradient(90deg,#00ff5d 1px,#00ff63 132px,#35ff65 150px,#74ff66 169px,#b5ff68 186px,#ffff6a 203px,#ffda5b 212px,#ffb64d 223px,#ff9942 235px,#ff7f38 248px,#ff682f 263px,#ff5427 280px,#ff3119 322px,#ff150f 377px,#ff0006 448px,#ff0000 539px,#ff0000 597px)"></i><i style="background:linear-gradient(90deg,#00ff61 2px,#01ff69 133px,#3aff6b 152px,#78ff6d 170px,#b6ff6f 186px,#fffe71 203px,#ffd962 212px,#ffb553 223px,#ff9847 235px,#ff7d3b 249px,#ff6632 264px,#ff5129 282px,#ff2e1b 325px,#ff1411 378px,#ff0008 446px,#ff0000 560px,#ff0000 611px)"></i><i style="background:linear-gradient(90deg,#00ff65 2px,#00ff6f 133px,#3aff71 152px,#74ff74 169px,#b2ff76 185px,#fffd78 203px,#ffd868 212px,#ffb559 223px,#ff974c 235px,#ff7c40 249px,#ff6536 264px,#ff502d 282px,#ff2e1e 325px,#ff1413 377px,#ff000a 444px,#ff0000 611px)"></i><i style="background:linear-gradient(90deg,#00ff69 3px,#00ff75 133px,#33ff77 150px,#70ff7a 168px,#aeff7d 184px,#fdff81 202px,#fffc7f 203px,#ffd76e 212px,#ffb45e 223px,#ff9650 235px,#ff7b44 249px,#ff643a 264px,#ff4f30 282px,#ff2d20 325px,#ff1415 377px,#ff000c 442px,#ff0000 611px)"></i><i style="background:linear-gradient(90deg,#00ff6d 3px,#01ff7b 134px,#39ff7e 152px,#74ff81 169px,#b6ff85 186px,#feff89 202px,#fffb87 203px,#ffd675 212px,#ffb364 223px,#ff9555 235px,#ff7a48 249px,#ff633d 264px,#ff4e33 282px,#ff2c23 325px,#ff1317 376px,#ff000d 440px,#ff0001 611px)"></i><i style="background:linear-gradient(90deg,#00ff72 3px,#00ff82 134px,#3bff85 153px,#77ff89 170px,#bbff8d 187px,#ffff91 202px,#ffd97d 211px,#ffb56b 222px,#ff965b 234px,#ff7c4e 247px,#ff6543 262px,#ff5038 280px,#ff3d2e 300px,#ff2d26 323px,#ff1419 374px,#ff000f 438px,#ff0002 611px)"></i><i style="background:linear-gradient(90deg,#00ff76 4px,#00ff88 134px,#34ff8b 151px,#73ff90 169px,#b3ff94 185px,#fffe98 202px,#ffd884 211px,#ffb471 222px,#ff9560 234px,#ff7b53 247px,#ff6446 262px,#ff4f3b 280px,#ff3c31 300px,#ff2c29 323px,#ff131b 373px,#ff0011 436px,#ff0003 611px)"></i><i style="background:linear-gradient(90deg,#00ff7b 4px,#00ff8e 134px,#30ff92 150px,#6fff97 168px,#afff9b 184px,#fffda0 202px,#ffd78b 211px,#ffb377 222px,#ff9466 234px,#ff7b57 247px,#ff634a 262px,#ff4e3e 280px,#ff3c34 300px,#ff2b2b 323px,#ff131e 372px,#ff0013 434px,#ff0004 611px)"></i><i style="background:linear-gradient(90deg,#00ff7f 5px,#00ff95 135px,#39ff9a 153px,#73ff9e 169px,#afffa3 184px,#fdffa9 201px,#fffca8 202px,#ffd692 211px,#ffb27c 222px,#ff936b 234px,#ff7a5c 247px,#ff634e 262px,#ff4d42 280px,#ff3b37 300px,#ff2b2e 323px,#ff1320 371px,#ff0015 432px,#ff0005 611px)"></i><i style="background:linear-gradient(90deg,#00ff83 5px,#00ff9b 135px,#35ffa0 152px,#72ffa6 169px,#b8ffac 186px,#feffb2 201px,#fffbb0 202px,#ffd598 211px,#ffb182 222px,#ff9270 234px,#ff7960 247px,#ff6252 262px,#ff4c45 280px,#ff3a3a 300px,#ff2a30 323px,#ff1322 370px,#ff0017 430px,#ff0006 611px)"></i><i style="background:linear-gradient(90deg,#00ff88 6px,#00ff94 76px,#00ffa2 135px,#2effa7 150px,#6effad 168px,#b4ffb4 185px,#ffffbb 201px,#fffbb8 202px,#ffd49f 211px,#ffb088 222px,#ff9175 234px,#ff7865 247px,#ff6156 262px,#ff4c49 280px,#ff393d 300px,#ff2933 323px,#ff1224 370px,#ff0019 428px,#ff0007 611px)"></i><i style="background:linear-gradient(90deg,#00ff8d 6px,#00ff9a 77px,#01ffa9 136px,#3bffaf 154px,#76ffb5 170px,#b8ffbc 186px,#ffffc3 201px,#ffd7a9 210px,#ffb190 221px,#ff927c 233px,#ff786a 246px,#ff615b 261px,#ff4c4d 279px,#ff2a36 321px,#ff1327 368px,#ff001b 426px,#ff0010 507px,#ff0008 611px)"></i><i style="background:linear-gradient(90deg,#00ff91 7px,#00ff9f 77px,#00ffb0 136px,#37ffb6 153px,#76ffbd 170px,#b4ffc4 185px,#fffecc 201px,#ffd6b0 210px,#ffb096 221px,#ff9181 233px,#ff786f 246px,#ff605f 261px,#ff4b50 279px,#ff2939 321px,#ff1229 367px,#ff001d 424px,#ff0011 506px,#ff0009 611px)"></i><i style="background:linear-gradient(90deg,#00ff96 8px,#00ffa5 78px,#00ffb7 136px,#2fffbd 151px,#71ffc5 169px,#b0ffcc 184px,#fcffd5 200px,#fffdd4 201px,#ffd5b7 210px,#ffaf9d 221px,#ff9086 233px,#ff7774 246px,#ff5f63 261px,#ff4a54 279px,#ff283c 321px,#ff122c 366px,#ff001f 422px,#ff0013 505px,#ff000a 611px)"></i><i style="background:linear-gradient(90deg,#00ff9b 8px,#00ffab 79px,#01ffbe 137px,#36ffc5 153px,#71ffcd 169px,#acffd4 183px,#fdffdf 200px,#fffcdc 201px,#ffd4bf 210px,#ffaea3 221px,#ff8f8c 233px,#ff7678 246px,#ff5f67 261px,#ff4957 279px,#ff283e 321px,#ff122e 366px,#ff0021 421px,#ff0014 504px,#ff000b 610px)"></i><i style="background:linear-gradient(90deg,#00ffa0 9px,#00ffb1 79px,#00ffc5 137px,#35ffcd 153px,#71ffd5 169px,#b5ffde 185px,#feffe8 200px,#fffbe5 201px,#ffd3c6 210px,#ffada9 221px,#ff8e91 233px,#ff757d 246px,#ff5e6b 261px,#ff485b 279px,#ff2741 321px,#ff1130 365px,#ff0023 419px,#ff0016 501px,#ff000c 608px)"></i><i style="background:linear-gradient(90deg,#00ffa5 9px,#00ffb7 79px,#00ffcd 137px,#31ffd4 152px,#75ffde 170px,#b5ffe7 185px,#fffff2 200px,#ffd6d1 209px,#ffb2b4 219px,#ff929a 231px,#ff7785 244px,#ff5f72 259px,#ff4b61 276px,#ff3852 296px,#ff2845 318px,#ff1233 362px,#ff0025 417px,#ff0017 499px,#ff000d 606px)"></i><i style="background:linear-gradient(90deg,#00ffaa 10px,#00ffbd 80px,#01ffd5 138px,#37ffdd 154px,#74ffe6 170px,#b6fff0 185px,#fffefb 200px,#ffd4d8 209px,#ffb1bb 219px,#ff91a0 231px,#ff768a 244px,#ff5e76 259px,#ff4a65 276px,#ff3755 296px,#ff2748 318px,#ff1136 362px,#ff0027 415px,#ff0019 498px,#ff000e 605px)"></i><i style="background:linear-gradient(90deg,#00ffaf 11px,#00ffc3 81px,#00ffdc 138px,#33ffe4 153px,#6cffee 168px,#9ffff6 180px,#d8ffff 192px,#fff8ff 201px,#ffcfdc 210px,#ffadbf 220px,#ff8ea4 232px,#ff738d 245px,#ff5c79 260px,#ff4867 277px,#ff3658 297px,#ff264a 319px,#ff1138 361px,#ff0029 413px,#ff001b 496px,#ff000f 603px)"></i><i style="background:linear-gradient(90deg,#00ffb4 11px,#00ffca 81px,#00ffe4 138px,#19ffe8 146px,#48fff0 159px,#9fffff 180px,#ffedff 203px,#ffc7dd 212px,#ffa6c0 222px,#ff88a5 234px,#ff6f8f 247px,#ff597b 262px,#ff4468 280px,#ff244b 322px,#ff103a 362px,#ff002b 411px,#ff001c 494px,#ff0011 601px)"></i><i style="background:linear-gradient(90deg,#00ffb9 12px,#00ffd0 82px,#01ffec 139px,#35fff5 154px,#6bffff 168px,#ffe2ff 205px,#ffbede 214px,#ff9dbf 225px,#ff81a5 237px,#ff698f 250px,#ff547b 265px,#ff4069 283px,#ff214c 325px,#ff0f3c 363px,#ff002e 409px,#ff001e 491px,#ff0012 599px)"></i><i style="background:linear-gradient(90deg,#00ffbe 12px,#00ffd7 82px,#00fff4 139px,#3cffff 156px,#9cecff 182px,#ffd8ff 207px,#ffb7df 216px,#ff96c0 227px,#ff7ca6 239px,#ff6591 252px,#ff507d 267px,#ff3d6b 285px,#ff1f4e 328px,#ff0e3e 364px,#ff0030 407px,#ff0020 489px,#ff0013 597px)"></i><i style="background:linear-gradient(90deg,#00ffc4 13px,#00ffdd 82px,#00fffc 139px,#10ffff 144px,#76eaff 173px,#ffcfff 209px,#ffafdf 218px,#ff90c1 229px,#ff77a8 241px,#ff5f91 255px,#ff4c7e 270px,#ff3a6c 288px,#ff1d4f 330px,#ff0d3f 365px,#ff0032 405px,#ff0021 487px,#ff0014 595px)"></i><i style="background:linear-gradient(90deg,#00ffc9 14px,#00ffe2 78px,#00ffff 131px,#01faff 140px,#7ce0ff 176px,#ffc6ff 211px,#ffa5dd 221px,#ff8bc2 231px,#ff72a9 243px,#ff5c92 257px,#ff497f 272px,#ff376d 290px,#ff1b50 333px,#ff0035 403px,#ff0023 485px,#ff0015 593px)"></i><i style="background:linear-gradient(90deg,#00ffcf 15px,#00ffe5 71px,#00ffff 119px,#00f2ff 140px,#7cd8ff 177px,#ffbdff 213px,#ff9ede 223px,#ff83c1 234px,#ff6ca9 246px,#ff5693 260px,#ff4580 275px,#ff346e 293px,#ff1851 336px,#ff0037 401px,#ff0025 483px,#ff0017 591px)"></i><i style="background:linear-gradient(90deg,#00ffd4 15px,#00ffe8 64px,#00ffff 107px,#00ebff 140px,#74d2ff 176px,#ffb5ff 215px,#ff97de 225px,#ff7dc2 236px,#ff67aa 248px,#ff5394 262px,#ff4180 278px,#ff316f 296px,#ff1652 339px,#ff003a 399px,#ff0027 481px,#ff0018 589px)"></i><i style="background:linear-gradient(90deg,#00ffda 16px,#00ffff 96px,#01e3ff 141px,#7ec9ff 180px,#ffadff 217px,#ff94e2 226px,#ff7cc8 236px,#ff68b1 247px,#ff569d 259px,#ff367a 288px,#ff1d5d 325px,#ff0d4b 358px,#ff003c 397px,#ff0028 479px,#ff0019 587px)"></i><i style="background:linear-gradient(90deg,#00ffe0 17px,#00ffff 84px,#00dcff 141px,#7dc2ff 181px,#ffa6ff 219px,#ff8de3 228px,#ff77c9 238px,#ff64b2 249px,#ff519d 262px,#ff337a 291px,#ff1b5e 327px,#ff0d4e 358px,#ff003f 395px,#ff002a 477px,#ff001b 585px)"></i><i style="background:linear-gradient(90deg,#00ffe5 17px,#00ffff 72px,#00d6ff 141px,#76bcff 180px,#ff9fff 221px,#ff87e3 230px,#ff72ca 240px,#ff5fb3 251px,#ff4d9e 264px,#ff317c 293px,#ff1960 329px,#ff0042 393px,#ff002c 475px,#ff001c 583px)"></i><i style="background:linear-gradient(90deg,#00ffeb 18px,#00ffff 60px,#01cfff 142px,#7cb4ff 183px,#ff98ff 223px,#ff82e4 232px,#ff6dcb 242px,#ff5bb5 253px,#ff4a9f 266px,#ff2e7d 295px,#ff1761 331px,#ff0044 391px,#ff002e 473px,#ff001d 581px)"></i><i style="background:linear-gradient(90deg,#00fff1 19px,#00ffff 48px,#00c9ff 142px,#7caeff 184px,#ff91ff 225px,#ff7ce4 234px,#ff69cc 244px,#ff57b6 255px,#ff47a1 268px,#ff2c7e 297px,#ff1662 333px,#ff0047 389px,#ff0030 471px,#ff001f 579px)"></i><i style="background:linear-gradient(90deg,#00fff7 20px,#00ffff 36px,#00c4ff 142px,#78a9ff 184px,#ff8bff 227px,#ff75e2 237px,#ff63ca 247px,#ff44a2 270px,#ff2980 299px,#ff1464 334px,#ff004a 387px,#ff0032 468px,#ff0020 577px)"></i><i style="background:linear-gradient(90deg,#00fffd 20px,#00e8ff 68px,#01beff 143px,#7ea2ff 187px,#ff85ff 229px,#ff70e3 239px,#ff5ecb 249px,#ff40a3 272px,#ff2781 301px,#ff1366 336px,#ff004c 386px,#ff0034 467px,#ff0021 575px)"></i><i style="background:linear-gradient(90deg,#00faff 21px,#00b9ff 143px,#7d9cff 188px,#ff7fff 231px,#ff6be3 241px,#ff5acc 251px,#ff3da4 274px,#ff2583 303px,#ff1167 338px,#ff004f 384px,#ff0036 465px,#ff0023 573px)"></i><i style="background:linear-gradient(90deg,#00f4ff 22px,#00b4ff 143px,#7798ff 187px,#ff79ff 233px,#ff66e4 243px,#ff56cd 253px,#ff3aa5 276px,#ff2384 305px,#ff0f68 340px,#ff0053 381px,#ff003f 434px,#ff0030 496px,#ff0024 572px)"></i><i style="background:linear-gradient(90deg,#00eeff 23px,#01aeff 144px,#7c92ff 190px,#ff74ff 235px,#ff62e4 245px,#ff52ce 255px,#ff38a7 278px,#ff2186 306px,#ff0e6a 341px,#ff0056 379px,#ff0041 434px,#ff0032 495px,#ff0025 570px)"></i><i style="background:linear-gradient(90deg,#00e9ff 23px,#00aaff 144px,#7b8dff 191px,#ff6fff 237px,#ff4ece 257px,#ff35a8 280px,#ff1f86 309px,#ff0d6c 343px,#ff0058 378px,#ff0043 434px,#ff0033 495px,#ff0027 568px)"></i><i style="background:linear-gradient(90deg,#00e4ff 24px,#00a5ff 144px,#7889ff 191px,#ff6aff 239px,#ff4bcf 259px,#ff32a9 282px,#ff1d89 310px,#ff0c6e 344px,#ff005b 376px,#ff0044 435px,#ff0035 494px,#ff0028 566px)"></i><i style="background:linear-gradient(90deg,#00deff 25px,#01a0ff 145px,#7086ff 189px,#ff65ff 241px,#ff63fd 242px,#ff46ce 262px,#ff2ea8 285px,#ff1a89 313px,#ff0a6e 347px,#ff005f 374px,#ff0046 436px,#ff0036 494px,#ff002a 564px)"></i><i style="background:linear-gradient(90deg,#00d9ff 26px,#009cff 145px,#7082ff 190px,#ff60ff 243px,#ff5ffd 244px,#ff42cf 264px,#ff2caa 287px,#ff188a 315px,#ff0970 348px,#ff0062 372px,#ff0047 436px,#ff0038 493px,#ff002b 562px)"></i><i style="background:linear-gradient(90deg,#00d4ff 27px,#0098ff 145px,#6d7eff 190px,#fe5cff 245px,#ff5afd 246px,#ff3fcf 266px,#ff29ab 289px,#ff178b 317px,#ff0771 350px,#ff0065 370px,#ff0049 437px,#ff0039 493px,#ff002d 560px)"></i><i style="background:linear-gradient(90deg,#00cfff 27px,#0194ff 146px,#7279ff 193px,#ff56fd 248px,#ff3cd0 268px,#ff27ac 291px,#ff158d 318px,#ff0673 351px,#ff0068 368px,#ff004a 437px,#ff003b 492px,#ff002e 558px)"></i><i style="background:linear-gradient(90deg,#00cbff 28px,#0090ff 146px,#7275ff 194px,#ff52fd 250px,#ff39d1 270px,#ff24ac 293px,#ff138e 320px,#ff0574 353px,#ff006c 366px,#ff005b 399px,#ff004c 437px,#ff003d 491px,#ff0030 556px)"></i><i style="background:linear-gradient(90deg,#00c6ff 29px,#008cff 146px,#6f72ff 194px,#ff4efd 252px,#ff37d3 271px,#ff23af 294px,#ff1290 321px,#ff0376 354px,#ff006f 364px,#ff0060 392px,#ff004e 437px,#ff003e 491px,#ff0031 554px)"></i><i style="background:linear-gradient(90deg,#00c2ff 30px,#0188ff 147px,#716dff 196px,#ff4afd 254px,#ff34d4 273px,#ff20b0 296px,#ff1091 323px,#ff0278 355px,#ff0062 393px,#ff0050 437px,#ff0040 490px,#ff0033 552px)"></i><i style="background:linear-gradient(90deg,#00bdff 31px,#0085ff 147px,#7369ff 198px,#ff46fd 256px,#ff31d4 275px,#ff1eb1 298px,#ff0e92 325px,#ff0179 357px,#ff0063 394px,#ff0051 438px,#ff0042 489px,#ff0034 550px)"></i><i style="background:linear-gradient(90deg,#00b9ff 32px,#0082ff 147px,#7166ff 198px,#ff42fd 258px,#ff2ed5 277px,#ff1cb1 300px,#ff0d93 327px,#ff007b 358px,#ff0065 395px,#ff0053 438px,#ff0043 489px,#ff0036 548px)"></i><i style="background:linear-gradient(90deg,#00b5ff 32px,#017eff 148px,#7362ff 200px,#ff3ffd 260px,#ff2bd5 279px,#ff1ab2 302px,#ff0b95 328px,#ff007c 359px,#ff0067 395px,#ff0054 438px,#ff0045 488px,#ff0038 546px)"></i><i style="background:linear-gradient(90deg,#00b1ff 33px,#007bff 148px,#725fff 201px,#ff3bfd 262px,#ff28d6 281px,#ff18b3 304px,#ff0a96 330px,#ff007d 361px,#ff0068 397px,#ff0056 438px,#ff0046 487px,#ff0039 544px)"></i><i style="background:linear-gradient(90deg,#00adff 34px,#0078ff 148px,#725cff 202px,#ff38fd 264px,#ff26d6 283px,#ff15b4 306px,#ff0897 332px,#ff0086 352px,#ff007f 362px,#ff006a 397px,#ff0058 438px,#ff0048 486px,#ff003b 542px)"></i><i style="background:linear-gradient(90deg,#00a9ff 35px,#0075ff 148px,#6d5aff 201px,#ff35fd 266px,#ff23d7 285px,#ff14b6 307px,#ff0a9f 327px,#ff008a 350px,#ff0081 363px,#ff006c 398px,#ff005a 438px,#ff003c 540px)"></i><i style="background:linear-gradient(90deg,#00a6ff 36px,#0072ff 149px,#7455ff 205px,#ff31fd 268px,#ff21d7 287px,#ff12b7 309px,#ff008f 348px,#ff0082 364px,#ff006d 399px,#ff005b 439px,#ff003e 539px)"></i><i style="background:linear-gradient(90deg,#00a2ff 37px,#006fff 149px,#7352ff 206px,#ff2efd 270px,#ff1ed8 289px,#ff10b8 311px,#ff0093 346px,#ff0083 366px,#ff006f 400px,#ff005d 439px,#ff0040 537px)"></i><i style="background:linear-gradient(90deg,#009eff 38px,#006cff 149px,#6f50ff 205px,#ff2bfd 272px,#ff1cd8 291px,#ff0eb8 313px,#ff0097 344px,#ff0085 367px,#ff0071 400px,#ff005e 439px,#ff0041 535px)"></i><i style="background:linear-gradient(90deg,#009bff 39px,#0169ff 150px,#754cff 209px,#ff28fd 274px,#ff19d9 293px,#ff0dba 314px,#ff009c 342px,#ff0087 368px,#ff0072 401px,#ff0060 439px,#ff0043 533px)"></i><i style="background:linear-gradient(90deg,#0098ff 39px,#0067ff 150px,#734aff 209px,#ff26fd 276px,#ff17d9 295px,#ff0bbb 316px,#ff00a1 340px,#ff0088 369px,#ff0074 402px,#ff0062 439px,#ff0045 531px)"></i><i style="background:linear-gradient(90deg,#0095ff 40px,#0064ff 150px,#7148ff 209px,#ff23fd 278px,#ff15da 297px,#ff09bc 318px,#ff00a5 338px,#ff008a 370px,#ff0076 402px,#ff0064 439px,#ff0047 529px)"></i><i style="background:linear-gradient(90deg,#0092ff 41px,#0162ff 151px,#7444ff 212px,#ff20fe 280px,#ff13dc 298px,#ff08be 319px,#ff00a9 337px,#ff008c 371px,#ff0077 403px,#ff0065 439px,#ff0049 527px)"></i><i style="background:linear-gradient(90deg,#008eff 42px,#005fff 151px,#7442ff 213px,#ff1dfe 282px,#ff11dc 300px,#ff06be 321px,#ff00ae 335px,#ff008d 372px,#ff0079 403px,#ff0068 438px,#ff004a 525px)"></i><i style="background:linear-gradient(90deg,#008bff 43px,#005dff 151px,#7240ff 213px,#ff1bfe 284px,#ff0fdd 302px,#ff04bf 323px,#ff00b3 333px,#ff008f 373px,#ff007b 403px,#ff0069 438px,#ff004c 523px)"></i><i style="background:linear-gradient(90deg,#0088ff 44px,#015aff 152px,#753cff 216px,#ff18fe 286px,#ff0ddd 304px,#ff03c1 324px,#ff00a7 347px,#ff0090 374px,#ff007d 404px,#ff006b 438px,#ff004e 521px)"></i><i style="background:linear-gradient(90deg,#0085ff 45px,#0058ff 152px,#753aff 217px,#ff16fe 288px,#ff0bdd 306px,#ff01c1 326px,#ff00a8 349px,#ff0092 375px,#ff007e 405px,#ff006d 438px,#ff0050 519px)"></i><i style="background:linear-gradient(90deg,#0083ff 46px,#0056ff 152px,#7139ff 216px,#ff14fe 290px,#ff09de 308px,#ff00c2 328px,#ff00a9 351px,#ff0094 376px,#ff0080 405px,#ff006f 438px,#ff0052 517px)"></i><i style="background:linear-gradient(90deg,#0080ff 47px,#0154ff 153px,#7735ff 220px,#ff11fe 292px,#ff07e0 309px,#ff00c4 329px,#ff00ab 352px,#ff0095 377px,#ff0071 438px,#ff0054 515px)"></i><i style="background:linear-gradient(90deg,#007dff 48px,#0052ff 153px,#7633ff 221px,#ff0ffe 294px,#ff00d0 322px,#ff00c4 331px,#ff00ac 353px,#ff0097 378px,#ff0072 438px,#ff0056 513px)"></i><i style="background:linear-gradient(90deg,#007aff 49px,#0050ff 153px,#7232ff 220px,#ff0dfe 296px,#ff00d6 320px,#ff00c5 333px,#ff00ad 355px,#ff0098 379px,#ff0075 437px,#ff0058 511px)"></i><i style="background:linear-gradient(90deg,#0078ff 50px,#014eff 154px,#762fff 223px,#ff0bfe 298px,#ff00db 319px,#ff00c7 334px,#ff00af 356px,#ff009a 380px,#ff0076 437px,#ff005a 509px)"></i><i style="background:linear-gradient(90deg,#0075ff 51px,#004cff 154px,#762dff 224px,#ff08fe 300px,#ff00e1 317px,#ff00c7 336px,#ff00b0 357px,#ff009b 381px,#ff0078 437px,#ff005c 507px)"></i><i style="background:linear-gradient(90deg,#0073ff 52px,#004aff 154px,#742bff 224px,#ff06fe 302px,#ff00e8 315px,#ff00c8 338px,#ff00b1 359px,#ff009d 382px,#ff007a 437px,#ff005e 506px)"></i><i style="background:linear-gradient(90deg,#0070ff 53px,#0148ff 155px,#7729ff 227px,#ff04fe 304px,#ff00ee 313px,#ff00c9 339px,#ff00b3 360px,#ff009e 383px,#ff007c 437px,#ff0060 504px)"></i><i style="background:linear-gradient(90deg,#006eff 54px,#0046ff 155px,#7727ff 228px,#ff02fe 306px,#ff00e2 323px,#ff00ca 341px,#ff00a0 384px,#ff007e 437px,#ff0062 502px)"></i><i style="background:linear-gradient(90deg,#006bff 55px,#0044ff 155px,#7525ff 228px,#ff00fe 308px,#ff00e2 325px,#ff00ca 343px,#ff00a1 385px,#ff007f 437px,#ff0064 500px)"></i><i style="background:linear-gradient(90deg,#0069ff 56px,#0142ff 156px,#7823ff 231px,#ff00fe 310px,#ff00e4 326px,#ff00cc 344px,#ff00a3 386px,#ff0082 436px,#ff0066 498px)"></i><i style="background:linear-gradient(90deg,#0067ff 57px,#0041ff 156px,#7721ff 232px,#f400ff 305px,#ff00fe 312px,#ff00e4 328px,#ff00ce 345px,#ff00a5 386px,#ff0084 436px,#ff0069 496px)"></i><i style="background:linear-gradient(90deg,#0065ff 58px,#003fff 156px,#7620ff 232px,#ed00ff 303px,#ff00fe 314px,#ff00e5 330px,#ff00ce 347px,#ff00a7 387px,#ff0086 435px,#ff006b 494px)"></i><i style="background:linear-gradient(90deg,#0062ff 59px,#013dff 157px,#711fff 230px,#e600ff 301px,#ff00fe 316px,#ff00e5 332px,#ff00cf 349px,#ff00a8 388px,#ff0088 435px,#ff006d 492px)"></i><i style="background:linear-gradient(90deg,#0060ff 60px,#003cff 157px,#6d1fff 229px,#df00ff 299px,#ff00fe 318px,#ff00d0 350px,#ff00aa 389px,#ff008a 435px,#ff006f 490px)"></i><i style="background:linear-gradient(90deg,#005eff 62px,#003aff 157px,#691eff 227px,#d900ff 297px,#ff00fe 320px,#ff00d2 351px,#ff00ac 389px,#ff008c 434px,#ff0072 488px)"></i><i style="background:linear-gradient(90deg,#005cff 63px,#0139ff 158px,#681dff 228px,#d300ff 295px,#ff00fe 322px,#ff00d2 353px,#ff00ad 390px,#ff008e 434px,#ff0074 486px)"></i><i style="background:linear-gradient(90deg,#005aff 64px,#0037ff 158px,#651cff 227px,#cd00ff 293px,#ff00fe 324px,#ff00d3 355px,#ff00af 391px,#ff0090 434px,#ff0077 484px)"></i><i style="background:linear-gradient(90deg,#0058ff 65px,#0036ff 158px,#611cff 225px,#c700ff 291px,#ff00fe 326px,#ff00d4 356px,#ff00b1 391px,#ff0093 433px,#ff0079 482px)"></i><i style="background:linear-gradient(90deg,#0056ff 66px,#0134ff 159px,#5f1bff 225px,#c100ff 289px,#ff00fe 328px,#ff00d6 357px,#ff00b2 392px,#ff0095 432px,#ff007b 480px)"></i><i style="background:linear-gradient(90deg,#0054ff 67px,#0033ff 159px,#5c1aff 224px,#bb00ff 287px,#ff00fe 330px,#ff00d6 359px,#ff00b4 393px,#ff0097 432px,#ff007e 478px)"></i><i style="background:linear-gradient(90deg,#0052ff 68px,#0032ff 159px,#581aff 222px,#b600ff 285px,#ff00fe 332px,#ff00d8 360px,#ff00b6 393px,#ff009a 431px,#ff0081 476px)"></i><i style="background:linear-gradient(90deg,#0050ff 69px,#0130ff 160px,#5719ff 222px,#b100ff 283px,#ff00fe 334px,#ff00d8 362px,#ff00b7 394px,#ff009b 431px,#ff0083 474px)"></i><i style="background:linear-gradient(90deg,#004eff 70px,#002fff 160px,#5418ff 221px,#ab00ff 281px,#ff00fe 336px,#ff00d9 363px,#ff00b9 395px,#ff009d 431px,#ff0085 473px)"></i><i style="background:linear-gradient(90deg,#004cff 72px,#002eff 160px,#5117ff 220px,#a600ff 279px,#ff00fe 338px,#ff00da 365px,#ff00bb 395px,#ff00a0 430px,#ff0088 471px)"></i><i style="background:linear-gradient(90deg,#004aff 73px,#012cff 161px,#a300ff 278px,#ff00fe 340px,#ff00db 366px,#ff00bd 396px,#ff00a2 430px,#ff008b 469px)"></i><i style="background:linear-gradient(90deg,#0049ff 74px,#002bff 161px,#9e00ff 276px,#ff00fe 342px,#ff00dd 367px,#ff00bf 396px,#ff00a5 429px,#ff008d 467px)"></i><i style="background:linear-gradient(90deg,#0047ff 75px,#002aff 161px,#9900ff 274px,#ff00fe 344px,#ff00dd 369px,#ff00c0 397px,#ff00a7 429px,#ff0090 465px)"></i><i style="background:linear-gradient(90deg,#0045ff 76px,#0128ff 162px,#9400ff 272px,#ff00fe 346px,#ff00df 370px,#ff00c2 397px,#ff00a9 428px,#ff0093 463px)"></i><i style="background:linear-gradient(90deg,#0044ff 77px,#0027ff 162px,#8f00ff 270px,#ff00fe 348px,#ff00df 372px,#ff00c4 398px,#ff00ab 428px,#ff0096 461px)"></i><i style="background:linear-gradient(90deg,#0042ff 78px,#0026ff 162px,#8b00ff 268px,#ff00fe 350px,#ff00e0 373px,#ff00c6 398px,#ff00ae 427px,#ff0099 459px)"></i><i style="background:linear-gradient(90deg,#0040ff 80px,#0125ff 163px,#8600ff 266px,#fe00ff 351px,#ff00e0 375px,#ff00c7 399px,#ff00b1 426px,#ff009c 457px)"></i><i style="background:linear-gradient(90deg,#003fff 81px,#0024ff 163px,#8200ff 264px,#fe00ff 353px,#ff00e1 377px,#ff00c9 400px,#ff009f 455px)"></i><i style="background:linear-gradient(90deg,#003dff 82px,#0023ff 163px,#7e00ff 262px,#fe00ff 355px,#ff00e2 378px,#ff00cb 400px,#ff00a2 453px)"></i><i style="background:linear-gradient(90deg,#003cff 83px,#0121ff 164px,#7a00ff 260px,#fe00ff 357px,#ff00cd 400px,#ff00a5 451px)"></i><i style="background:linear-gradient(90deg,#003aff 84px,#0021ff 164px,#7500ff 258px,#fe00ff 359px,#ff00cf 401px,#ff00a8 449px)"></i><i style="background:linear-gradient(90deg,#0038ff 86px,#0020ff 164px,#7100ff 256px,#fe00ff 361px,#ff00d1 401px,#ff00ab 447px)"></i><i style="background:linear-gradient(90deg,#0037ff 87px,#011eff 165px,#6e00ff 254px,#fe00ff 363px,#ff00d2 402px,#ff00af 445px)"></i><i style="background:linear-gradient(90deg,#0036ff 88px,#001dff 165px,#6a00ff 252px,#fe00ff 365px,#ff00d5 402px,#ff00b2 443px)"></i><i style="background:linear-gradient(90deg,#0034ff 89px,#001cff 165px,#6600ff 250px,#fe00ff 367px,#ff00d7 402px,#ff00b5 441px)"></i><i style="background:linear-gradient(90deg,#0033ff 90px,#011bff 166px,#6200ff 248px,#fe00ff 369px,#ff00d8 403px,#ff00b8 440px)"></i><i style="background:linear-gradient(90deg,#0031ff 92px,#001aff 166px,#5e00ff 246px,#fe00ff 371px,#ff00d9 404px,#ff00bb 438px)"></i><i style="background:linear-gradient(90deg,#0030ff 93px,#001aff 166px,#5c00ff 245px,#fe00ff 373px,#ff00dc 404px,#ff00bf 436px)"></i><i style="background:linear-gradient(90deg,#002fff 94px,#0019ff 166px,#5900ff 243px,#aa00ff 310px,#fe00ff 375px,#ff00de 404px,#ff00c3 434px)"></i><i style="background:linear-gradient(90deg,#002dff 95px,#0018ff 167px,#5500ff 241px,#a900ff 310px,#fe00ff 377px,#ff00df 405px,#ff00c6 432px)"></i><i style="background:linear-gradient(90deg,#002cff 97px,#0017ff 167px,#5200ff 239px,#a700ff 310px,#fe00ff 379px,#ff00e2 405px,#ff00ca 430px)"></i><i style="background:linear-gradient(90deg,#002bff 98px,#0016ff 167px,#4e00ff 237px,#a500ff 310px,#fe00ff 381px,#ff00ce 428px)"></i><i style="background:linear-gradient(90deg,#0029ff 99px,#0115ff 168px,#4b00ff 235px,#a300ff 310px,#fe00ff 383px,#ff00d2 426px)"></i><i style="background:linear-gradient(90deg,#0028ff 100px,#0014ff 168px,#4800ff 233px,#a200ff 310px,#fe00ff 385px,#ff00d6 424px)"></i><i style="background:linear-gradient(90deg,#0027ff 101px,#0013ff 168px,#4500ff 231px,#a000ff 310px,#fe00ff 387px,#ff00da 422px)"></i><i style="background:linear-gradient(90deg,#0026ff 103px,#0112ff 169px,#4200ff 229px,#9e00ff 310px,#fe00ff 389px,#ff00de 420px)"></i><i style="background:linear-gradient(90deg,#0024ff 104px,#0012ff 169px,#3f00ff 227px,#9d00ff 310px,#fe00ff 391px,#ff00e2 418px)"></i><i style="background:linear-gradient(90deg,#0023ff 105px,#0011ff 169px,#3c00ff 225px,#9b00ff 310px,#fe00ff 393px,#ff00e6 416px)"></i><i style="background:linear-gradient(90deg,#0022ff 107px,#0110ff 170px,#3900ff 223px,#9900ff 310px,#fe00ff 395px,#ff00ea 414px)"></i><i style="background:linear-gradient(90deg,#0021ff 108px,#000fff 170px,#3600ff 221px,#9800ff 310px,#fe00ff 397px,#ff00ef 412px)"></i><i style="background:linear-gradient(90deg,#0020ff 109px,#000eff 170px,#3300ff 219px,#9600ff 310px,#fe00ff 399px,#ff00f3 410px)"></i><i style="background:linear-gradient(90deg,#001fff 110px,#010dff 171px,#3000ff 217px,#9600ff 311px,#fe00ff 401px,#ff00f8 408px)"></i><i style="background:linear-gradient(90deg,#001dff 112px,#000dff 171px,#2d00ff 215px,#9400ff 311px,#fe00ff 403px,#ff00fb 407px)"></i><i style="background:linear-gradient(90deg,#001cff 113px,#000cff 171px,#2b00ff 213px,#9300ff 311px,#fe00ff 405px)"></i><i style="background:linear-gradient(90deg,#001bff 114px,#010bff 172px,#2800ff 211px,#8f00ff 309px,#f900ff 403px)"></i><i style="background:linear-gradient(90deg,#001aff 116px,#000bff 172px,#2600ff 210px,#8c00ff 307px,#f500ff 401px)"></i><i style="background:linear-gradient(90deg,#0019ff 117px,#000aff 172px,#2400ff 208px,#8800ff 305px,#f000ff 399px)"></i><i style="background:linear-gradient(90deg,#0018ff 118px,#0109ff 173px,#2100ff 206px,#8500ff 303px,#ec00ff 397px)"></i><i style="background:linear-gradient(90deg,#0017ff 120px,#0008ff 173px,#1f00ff 204px,#8100ff 301px,#e700ff 395px)"></i><i style="background:linear-gradient(90deg,#0016ff 121px,#0008ff 173px,#1c00ff 202px,#7e00ff 299px,#e300ff 393px)"></i><i style="background:linear-gradient(90deg,#0015ff 123px,#0107ff 174px,#1a00ff 200px,#7b00ff 297px,#df00ff 391px)"></i><i style="background:linear-gradient(90deg,#0014ff 124px,#0006ff 174px,#1700ff 198px,#7700ff 295px,#db00ff 389px)"></i><i style="background:linear-gradient(90deg,#0013ff 125px,#0006ff 174px,#1500ff 196px,#7400ff 293px,#d700ff 387px)"></i><i style="background:linear-gradient(90deg,#0012ff 127px,#0105ff 175px,#1200ff 194px,#7100ff 291px,#d300ff 385px)"></i><i style="background:linear-gradient(90deg,#0011ff 128px,#0004ff 175px,#1000ff 192px,#6e00ff 289px,#cf00ff 383px)"></i><i style="background:linear-gradient(90deg,#0010ff 130px,#0004ff 175px,#0e00ff 190px,#6b00ff 287px,#cb00ff 381px)"></i><i style="background:linear-gradient(90deg,#000fff 131px,#0103ff 176px,#0c00ff 188px,#6200ff 279px,#c700ff 379px)"></i><i style="background:linear-gradient(90deg,#000eff 133px,#0003ff 176px,#0900ff 186px,#6000ff 278px,#c300ff 377px)"></i><i style="background:linear-gradient(90deg,#000dff 134px,#0002ff 176px,#5f00ff 278px,#c000ff 376px)"></i><i style="background:linear-gradient(90deg,#000cff 135px,#0101ff 177px,#5d00ff 277px,#bd00ff 374px)"></i><i style="background:linear-gradient(90deg,#000bff 137px,#0001ff 177px,#5b00ff 276px,#b900ff 372px)"></i><i style="background:linear-gradient(90deg,#000aff 138px,#0000ff 177px,#5900ff 275px,#b600ff 370px)"></i><i style="background:linear-gradient(90deg,#0009ff 140px,#0100ff 178px,#5800ff 274px,#b200ff 368px)"></i><i style="background:linear-gradient(90deg,#0008ff 141px,#0000ff 178px,#5600ff 273px,#af00ff 366px)"></i><i style="background:linear-gradient(90deg,#0007ff 143px,#0000ff 178px,#5400ff 272px,#ab00ff 364px)"></i><i style="background:linear-gradient(90deg,#0006ff 145px,#0100ff 179px,#5300ff 272px,#a800ff 362px)"></i><i style="background:linear-gradient(90deg,#0005ff 146px,#0000ff 179px,#5200ff 271px,#a400ff 360px)"></i><i style="background:linear-gradient(90deg,#0004ff 148px,#0000ff 179px,#a100ff 358px)"></i><i style="background:linear-gradient(90deg,#0004ff 149px,#0100ff 180px,#9e00ff 356px)"></i><i style="background:linear-gradient(90deg,#0003ff 151px,#0000ff 180px,#9b00ff 354px)"></i><i style="background:linear-gradient(90deg,#0002ff 152px,#0000ff 180px,#9800ff 352px)"></i><i style="background:linear-gradient(90deg,#0001ff 154px,#0100ff 181px,#9500ff 350px)"></i><i style="background:linear-gradient(90deg,#0000ff 156px,#0000ff 181px,#9200ff 348px)"></i><i style="background:linear-gradient(90deg,#0000ff 157px,#0000ff 181px,#8e00ff 346px)"></i><i style="background:linear-gradient(90deg,#0000ff 159px,#0100ff 182px,#8c00ff 344px)"></i><i style="background:linear-gradient(90deg,#0000ff 161px,#0000ff 182px,#8a00ff 343px)"></i><i style="background:linear-gradient(90deg,#0000ff 162px,#0000ff 182px,#8700ff 341px)"></i><i style="background:linear-gradient(90deg,#0000ff 164px,#0100ff 183px,#8400ff 339px)"></i><i style="background:linear-gradient(90deg,#0000ff 166px,#0000ff 183px,#8100ff 337px)"></i><i style="background:linear-gradient(90deg,#0000ff 168px,#0000ff 183px,#7e00ff 335px)"></i><i style="background:linear-gradient(90deg,#0000ff 169px,#0100ff 184px,#7b00ff 333px)"></i><i style="background:linear-gradient(90deg,#0000ff 171px,#0000ff 184px,#7900ff 331px)"></i><i style="background:linear-gradient(90deg,#0000ff 173px,#0000ff 184px,#7600ff 329px)"></i><i style="background:linear-gradient(90deg,#0000ff 175px,#0100ff 185px,#7300ff 327px)"></i><i style="background:linear-gradient(90deg,#0000ff 177px,#0100ff 185px,#7100ff 325px)"></i><i style="background:linear-gradient(90deg,#0000ff 179px,#0000ff 185px,#6e00ff 323px)"></i><i style="background:linear-gradient(90deg,#0000ff 181px,#0000ff 185px,#0b00ff 199px,#6c00ff 321px)"></i><i style="background:linear-gradient(90deg,#0000ff 183px,#6900ff 319px)"></i><i style="background:linear-gradient(90deg,#0000ff 185px,#6700ff 317px)"></i><i style="background:linear-gradient(90deg,#0100ff 187px,#6400ff 315px)"></i><i style="background:linear-gradient(90deg,#0200ff 189px,#6200ff 313px)"></i><i style="background:linear-gradient(90deg,#0300ff 191px,#5f00ff 311px)"></i><i style="background:linear-gradient(90deg,#0400ff 193px,#5e00ff 310px)"></i><i style="background:linear-gradient(90deg,#0600ff 196px,#5c00ff 308px)"></i><i style="background:linear-gradient(90deg,#0800ff 198px,#5900ff 306px)"></i><i style="background:linear-gradient(90deg,#0900ff 200px,#5700ff 304px)"></i><i style="background:linear-gradient(90deg,#0a00ff 202px,#5500ff 302px)"></i><i style="background:linear-gradient(90deg,#0c00ff 205px,#5300ff 300px)"></i><i style="background:linear-gradient(90deg,#0d00ff 207px,#5000ff 298px)"></i><i style="background:linear-gradient(90deg,#0e00ff 209px,#4e00ff 296px)"></i><i style="background:linear-gradient(90deg,#1000ff 212px,#4c00ff 294px)"></i><i style="background:linear-gradient(90deg,#1100ff 214px,#4a00ff 292px)"></i><i style="background:linear-gradient(90deg,#1300ff 217px,#4800ff 290px)"></i><i style="background:linear-gradient(90deg,#1400ff 219px,#4600ff 288px)"></i><i style="background:linear-gradient(90deg,#1600ff 222px,#4400ff 286px)"></i><i style="background:linear-gradient(90deg,#1700ff 224px,#4200ff 284px)"></i><i style="background:linear-gradient(90deg,#1800ff 226px,#4000ff 282px)"></i><i style="background:linear-gradient(90deg,#1a00ff 229px,#3e00ff 280px)"></i><i style="background:linear-gradient(90deg,#1b00ff 231px,#3c00ff 278px)"></i><i style="background:linear-gradient(90deg,#1c00ff 234px,#3b00ff 277px)"></i><i style="background:linear-gradient(90deg,#1d00ff 236px,#3900ff 275px)"></i><i style="background:linear-gradient(90deg,#1e00ff 238px,#3700ff 273px)"></i><i style="background:linear-gradient(90deg,#2000ff 241px,#3500ff 271px)"></i><i style="background:linear-gradient(90deg,#2100ff 243px,#3300ff 269px)"></i><i style="background:linear-gradient(90deg,#2200ff 245px,#3100ff 267px)"></i><i style="background:linear-gradient(90deg,#2400ff 248px,#2f00ff 265px)"></i><i style="background:linear-gradient(90deg,#2500ff 251px,#2d00ff 263px)"></i><i style="background:linear-gradient(90deg,#2700ff 254px,#2c00ff 261px)"></i><i></i><i></i><i></i><i></i><i></i><i></i><svg width="609" height="469" style="left:0;top:0"><path fill="#000" fill-opacity="0.395" fill-rule="evenodd" d="M-5-5H614V474H-5zM455.6,61.1L126.0,30.2L177.0,345.8z"/></svg></div></div>
<div class="b" style="left:964px;top:573px;width:1px;height:5px;background:#b4b4b4"></div>
<div class="ax" style="left:934.5px;top:582.2px;width:60px;text-align:center">0</div>
<div class="b" style="left:958px;top:572px;width:6px;height:1px;background:#b4b4b4"></div>
<div class="ax" style="left:898px;top:566.3px;width:60px;text-align:right">0</div>
<div class="b" style="left:1015px;top:573px;width:1px;height:5px;background:#b4b4b4"></div>
<div class="ax" style="left:985.1px;top:582.2px;width:60px;text-align:center">0,05</div>
<div class="b" style="left:958px;top:532px;width:6px;height:1px;background:#b4b4b4"></div>
<div class="ax" style="left:898px;top:527.2px;width:60px;text-align:right">0,05</div>
<div class="b" style="left:1065px;top:573px;width:1px;height:5px;background:#b4b4b4"></div>
<div class="ax" style="left:1035.7px;top:582.2px;width:60px;text-align:center">0,1</div>
<div class="b" style="left:958px;top:494px;width:6px;height:1px;background:#b4b4b4"></div>
<div class="ax" style="left:898px;top:488.0px;width:60px;text-align:right">0,1</div>
<div class="b" style="left:1116px;top:573px;width:1px;height:5px;background:#b4b4b4"></div>
<div class="ax" style="left:1086.3px;top:582.2px;width:60px;text-align:center">0,15</div>
<div class="b" style="left:958px;top:454px;width:6px;height:1px;background:#b4b4b4"></div>
<div class="ax" style="left:898px;top:448.9px;width:60px;text-align:right">0,15</div>
<div class="b" style="left:1166px;top:573px;width:1px;height:5px;background:#b4b4b4"></div>
<div class="ax" style="left:1136.9px;top:582.2px;width:60px;text-align:center">0,2</div>
<div class="b" style="left:958px;top:416px;width:6px;height:1px;background:#b4b4b4"></div>
<div class="ax" style="left:898px;top:409.7px;width:60px;text-align:right">0,2</div>
<div class="b" style="left:1217px;top:573px;width:1px;height:5px;background:#b4b4b4"></div>
<div class="ax" style="left:1187.5px;top:582.2px;width:60px;text-align:center">0,25</div>
<div class="b" style="left:958px;top:376px;width:6px;height:1px;background:#b4b4b4"></div>
<div class="ax" style="left:898px;top:370.6px;width:60px;text-align:right">0,25</div>
<div class="b" style="left:1268px;top:573px;width:1px;height:5px;background:#b4b4b4"></div>
<div class="ax" style="left:1238.1px;top:582.2px;width:60px;text-align:center">0,3</div>
<div class="b" style="left:958px;top:338px;width:6px;height:1px;background:#b4b4b4"></div>
<div class="ax" style="left:898px;top:331.4px;width:60px;text-align:right">0,3</div>
<div class="b" style="left:1318px;top:573px;width:1px;height:5px;background:#b4b4b4"></div>
<div class="ax" style="left:1288.7px;top:582.2px;width:60px;text-align:center">0,35</div>
<div class="b" style="left:958px;top:298px;width:6px;height:1px;background:#b4b4b4"></div>
<div class="ax" style="left:898px;top:292.3px;width:60px;text-align:right">0,35</div>
<div class="b" style="left:1369px;top:573px;width:1px;height:5px;background:#b4b4b4"></div>
<div class="ax" style="left:1339.3px;top:582.2px;width:60px;text-align:center">0,4</div>
<div class="b" style="left:958px;top:260px;width:6px;height:1px;background:#b4b4b4"></div>
<div class="ax" style="left:898px;top:253.1px;width:60px;text-align:right">0,4</div>
<div class="b" style="left:1419px;top:573px;width:1px;height:5px;background:#b4b4b4"></div>
<div class="ax" style="left:1389.9px;top:582.2px;width:60px;text-align:center">0,45</div>
<div class="b" style="left:958px;top:220px;width:6px;height:1px;background:#b4b4b4"></div>
<div class="ax" style="left:898px;top:214.0px;width:60px;text-align:right">0,45</div>
<div class="b" style="left:1470px;top:573px;width:1px;height:5px;background:#b4b4b4"></div>
<div class="ax" style="left:1440.5px;top:582.2px;width:60px;text-align:center">0,5</div>
<div class="b" style="left:958px;top:182px;width:6px;height:1px;background:#b4b4b4"></div>
<div class="ax" style="left:898px;top:174.8px;width:60px;text-align:right">0,5</div>
<div class="b" style="left:1521px;top:573px;width:1px;height:5px;background:#b4b4b4"></div>
<div class="ax" style="left:1491.1px;top:582.2px;width:60px;text-align:center">0,55</div>
<div class="b" style="left:958px;top:142px;width:6px;height:1px;background:#b4b4b4"></div>
<div class="ax" style="left:898px;top:135.7px;width:60px;text-align:right">0,55</div>
<svg width="1583" height="961" style="left:0;top:0"><rect x="1084.2" y="125.0" width="12.6" height="12.6" fill="none" stroke="#fff" stroke-width="1.6" stroke-opacity="0.9"/><rect x="1107.7" y="148.6" width="12.6" height="12.6" fill="none" stroke="#fff" stroke-width="1.6" stroke-opacity="0.9"/><rect x="1145.4" y="140.7" width="12.6" height="12.6" fill="none" stroke="#fff" stroke-width="1.6" stroke-opacity="0.9"/><rect x="1164.6" y="132.5" width="12.6" height="12.6" fill="none" stroke="#fff" stroke-width="1.6" stroke-opacity="0.9"/><rect x="1190.7" y="136.7" width="12.6" height="12.6" fill="none" stroke="#fff" stroke-width="1.6" stroke-opacity="0.9"/><rect x="1220.7" y="143.0" width="12.6" height="12.6" fill="none" stroke="#fff" stroke-width="1.6" stroke-opacity="0.9"/><rect x="1142.8" y="161.6" width="12.6" height="12.6" fill="none" stroke="#fff" stroke-width="1.6" stroke-opacity="0.9"/><rect x="1113.7" y="191.7" width="12.6" height="12.6" fill="none" stroke="#fff" stroke-width="1.6" stroke-opacity="0.9"/><rect x="1098.7" y="209.6" width="12.6" height="12.6" fill="none" stroke="#fff" stroke-width="1.6" stroke-opacity="0.9"/><rect x="1103.8" y="239.1" width="12.6" height="12.6" fill="none" stroke="#fff" stroke-width="1.6" stroke-opacity="0.9"/><rect x="1135.5" y="236.4" width="12.6" height="12.6" fill="none" stroke="#fff" stroke-width="1.6" stroke-opacity="0.9"/><rect x="1155.6" y="241.5" width="12.6" height="12.6" fill="none" stroke="#fff" stroke-width="1.6" stroke-opacity="0.9"/><rect x="1248.7" y="231.6" width="12.6" height="12.6" fill="none" stroke="#fff" stroke-width="1.6" stroke-opacity="0.9"/><rect x="1189.1" y="258.6" width="12.6" height="12.6" fill="none" stroke="#fff" stroke-width="1.6" stroke-opacity="0.9"/><rect x="1138.7" y="287.6" width="12.6" height="12.6" fill="none" stroke="#fff" stroke-width="1.6" stroke-opacity="0.9"/><rect x="1267.2" y="306.8" width="12.6" height="12.6" fill="none" stroke="#fff" stroke-width="1.6" stroke-opacity="0.9"/><rect x="1280.1" y="187.5" width="12.6" height="12.6" fill="none" stroke="#fff" stroke-width="1.6" stroke-opacity="0.9"/><rect x="1138.6" y="335.7" width="12.6" height="12.6" fill="none" stroke="#fff" stroke-width="1.6" stroke-opacity="0.9"/><rect x="1135.7" y="441.6" width="12.6" height="12.6" fill="none" stroke="#fff" stroke-width="1.6" stroke-opacity="0.9"/><rect x="1338.7" y="175.8" width="12.6" height="12.6" fill="none" stroke="#fff" stroke-width="1.6" stroke-opacity="0.9"/><rect x="1415.3" y="156.2" width="12.6" height="12.6" fill="none" stroke="#fff" stroke-width="1.6" stroke-opacity="0.9"/><rect x="1261.7" y="147.1" width="12.6" height="12.6" fill="none" stroke="#fff" stroke-width="1.6" stroke-opacity="0.9"/><rect x="1194.8" y="170.5" width="12.6" height="12.6" fill="none" stroke="#fff" stroke-width="1.6" stroke-opacity="0.9"/><rect x="1194.6" y="180.7" width="12.6" height="12.6" fill="none" stroke="#fff" stroke-width="1.6" stroke-opacity="0.9"/><rect x="1206.9" y="173.6" width="12.6" height="12.6" fill="none" stroke="#fff" stroke-width="1.6" stroke-opacity="0.9"/><rect x="1213.5" y="162.7" width="12.6" height="12.6" fill="none" stroke="#fff" stroke-width="1.6" stroke-opacity="0.9"/><rect x="1214.3" y="169.7" width="12.6" height="12.6" fill="none" stroke="#fff" stroke-width="1.6" stroke-opacity="0.9"/><rect x="1224.4" y="169.7" width="12.6" height="12.6" fill="none" stroke="#fff" stroke-width="1.6" stroke-opacity="0.9"/><rect x="1227.5" y="155.7" width="12.6" height="12.6" fill="none" stroke="#fff" stroke-width="1.6" stroke-opacity="0.9"/><rect x="1236.1" y="154.1" width="12.6" height="12.6" fill="none" stroke="#fff" stroke-width="1.6" stroke-opacity="0.9"/><rect x="1237.7" y="167.4" width="12.6" height="12.6" fill="none" stroke="#fff" stroke-width="1.6" stroke-opacity="0.9"/><rect x="1243.9" y="161.2" width="12.6" height="12.6" fill="none" stroke="#fff" stroke-width="1.6" stroke-opacity="0.9"/><rect x="1157.5" y="198.4" width="14" height="14" fill="none" stroke="#000" stroke-width="2.4"/><rect x="1159.6" y="200.5" width="9.8" height="9.8" fill="none" stroke="#fff" stroke-width=".8" stroke-opacity=".9"/><circle cx="1091.5" cy="131.5" r="3.75" fill="#10f020" stroke="#101010" stroke-width="1.15"/><circle cx="1113.7" cy="153.5" r="3.75" fill="#5a8c52" stroke="#101010" stroke-width="1.15"/><circle cx="1154.1" cy="145.4" r="3.75" fill="#9aae50" stroke="#101010" stroke-width="1.15"/><circle cx="1174.5" cy="139.4" r="3.75" fill="#fff000" stroke="#101010" stroke-width="1.15"/><circle cx="1200.4" cy="141.4" r="3.75" fill="#e4c630" stroke="#101010" stroke-width="1.15"/><circle cx="1230.3" cy="148.5" r="3.75" fill="#e2a636" stroke="#101010" stroke-width="1.15"/><circle cx="1151.5" cy="166.5" r="3.75" fill="#586c44" stroke="#101010" stroke-width="1.15"/><circle cx="1118.9" cy="198.3" r="3.75" fill="#74b8a6" stroke="#101010" stroke-width="1.15"/><circle cx="1102.5" cy="215.6" r="3.75" fill="#00f6ff" stroke="#101010" stroke-width="1.15"/><circle cx="1106.3" cy="245.5" r="3.75" fill="#0f8ea4" stroke="#101010" stroke-width="1.15"/><circle cx="1139.3" cy="244.6" r="3.75" fill="#6f88aa" stroke="#101010" stroke-width="1.15"/><circle cx="1160.6" cy="246.5" r="3.75" fill="#8a88ba" stroke="#101010" stroke-width="1.15"/><circle cx="1256.3" cy="237.5" r="3.75" fill="#b8608e" stroke="#101010" stroke-width="1.15"/><circle cx="1196.5" cy="266.3" r="3.75" fill="#5e3e66" stroke="#101010" stroke-width="1.15"/><circle cx="1139.3" cy="294.5" r="3.75" fill="#5868a8" stroke="#101010" stroke-width="1.15"/><circle cx="1269.4" cy="309.5" r="3.75" fill="#f400f4" stroke="#402060" stroke-width="1.15"/><circle cx="1290.4" cy="192.5" r="3.75" fill="#c25a66" stroke="#101010" stroke-width="1.15"/><circle cx="1138.4" cy="345.4" r="3.75" fill="#404a92" stroke="#101010" stroke-width="1.15"/><circle cx="1130.6" cy="440.4" r="3.75" fill="#0000f0" stroke="#000070" stroke-width="1.15"/><circle cx="1356.7" cy="179.3" r="3.75" fill="#b04452" stroke="#101010" stroke-width="1.15"/><circle cx="1426.3" cy="161.6" r="3.75" fill="#ff0000" stroke="#600000" stroke-width="1.15"/><circle cx="1272.8" cy="152.2" r="3.75" fill="#c88442" stroke="#101010" stroke-width="1.15"/><circle cx="1205.0" cy="185.8" r="3.75" fill="#e8b098" stroke="#101010" stroke-width="1.15"/><circle cx="1200.7" cy="185.4" r="3.75" fill="#f2baa2" stroke="#101010" stroke-width="1.15"/><circle cx="1203.4" cy="176.4" r="3.75" fill="#f8c2a4" stroke="#101010" stroke-width="1.15"/><circle cx="1215.5" cy="179.9" r="3.75" fill="#7c5242" stroke="#101010" stroke-width="1.15"/><circle cx="1216.7" cy="175.6" r="3.75" fill="#c09272" stroke="#101010" stroke-width="1.15"/><circle cx="1222.5" cy="166.7" r="3.75" fill="#c89272" stroke="#101010" stroke-width="1.15"/><circle cx="1221.0" cy="176.0" r="3.75" fill="#c88e70" stroke="#101010" stroke-width="1.15"/><circle cx="1221.4" cy="172.5" r="3.75" fill="#d49a7a" stroke="#101010" stroke-width="1.15"/><circle cx="1229.2" cy="172.1" r="3.75" fill="#b88262" stroke="#101010" stroke-width="1.15"/><circle cx="1231.5" cy="174.5" r="3.75" fill="#e29a82" stroke="#101010" stroke-width="1.15"/><circle cx="1244.0" cy="168.2" r="3.75" fill="#c88252" stroke="#101010" stroke-width="1.15"/><circle cx="1237.5" cy="167.3" r="3.75" fill="#e09a72" stroke="#101010" stroke-width="1.15"/><circle cx="1244.6" cy="172.5" r="3.75" fill="#f2a282" stroke="#101010" stroke-width="1.15"/><circle cx="1242.4" cy="161.2" r="3.75" fill="#a87248" stroke="#101010" stroke-width="1.15"/><circle cx="1251.4" cy="158.1" r="3.75" fill="#8c5a3a" stroke="#101010" stroke-width="1.15"/><circle cx="1260.5" cy="163.2" r="3.75" fill="#7c5232" stroke="#101010" stroke-width="1.15"/><circle cx="1276.7" cy="153.4" r="3.75" fill="#b07240" stroke="#101010" stroke-width="1.15"/><circle cx="1165.0" cy="205.4" r="3.6" fill="#a6a6a6" stroke="#000" stroke-width="1.15"/><circle cx="1148.5" cy="239.5" r="3.9" fill="#000" stroke="#000" stroke-width="1.15"/></svg>
<div class="b" style="left:1376px;top:405px;width:195px;height:130px;background:#333"></div>
<div class="b" style="left:1379px;top:408px;width:190px;height:124px;border:1px solid #b49c86;background:linear-gradient(142deg,#ff8c2a,#ff6c22 45%,#ff4a22 85%,#fb4423);overflow:hidden"><svg width="188" height="122" style="left:0;top:0"><rect x="24.8" y="35.7" width="12.6" height="12.6" fill="none" stroke="#fff" stroke-width="1.5" stroke-opacity="0.85"/><rect x="124.8" y="16.7" width="12.6" height="12.6" fill="none" stroke="#fff" stroke-width="1.5" stroke-opacity="0.85"/><rect x="171.2" y="17.7" width="12.6" height="12.6" fill="none" stroke="#fff" stroke-width="1.5" stroke-opacity="0.85"/><rect x="86.7" y="53.7" width="12.6" height="12.6" fill="none" stroke="#fff" stroke-width="1.5" stroke-opacity="0.85"/><rect x="169.8" y="52.6" width="12.6" height="12.6" fill="none" stroke="#fff" stroke-width="1.5" stroke-opacity="0.85"/><rect x="104.6" y="66.8" width="12.6" height="12.6" fill="none" stroke="#fff" stroke-width="1.5" stroke-opacity="0.85"/><rect x="4.1" y="66.6" width="12.6" height="12.6" fill="none" stroke="#fff" stroke-width="1.5" stroke-opacity="0.85"/><rect x="10.3" y="74.8" width="12.6" height="12.6" fill="none" stroke="#fff" stroke-width="1.5" stroke-opacity="0.85"/><rect x="17.6" y="86.6" width="12.6" height="12.6" fill="none" stroke="#fff" stroke-width="1.5" stroke-opacity="0.85"/><rect x="90.7" y="90.7" width="12.6" height="12.6" fill="none" stroke="#fff" stroke-width="1.5" stroke-opacity="0.85"/><circle cx="176.6" cy="17.4" r="3.85" fill="#8a6238" stroke="#101010" stroke-width="1.15"/><circle cx="48.4" cy="38.5" r="3.85" fill="#c48a58" stroke="#101010" stroke-width="1.15"/><circle cx="111.6" cy="56.4" r="3.85" fill="#d49468" stroke="#101010" stroke-width="1.15"/><circle cx="132.0" cy="69.6" r="3.85" fill="#c88a58" stroke="#101010" stroke-width="1.15"/><circle cx="11.5" cy="69.6" r="3.85" fill="#d8a078" stroke="#101010" stroke-width="1.15"/><circle cx="21.7" cy="70.6" r="3.85" fill="#f2b08c" stroke="#101010" stroke-width="1.15"/><circle cx="37.7" cy="75.5" r="3.85" fill="#c89060" stroke="#101010" stroke-width="1.15"/><circle cx="45.0" cy="87.5" r="3.85" fill="#d89868" stroke="#101010" stroke-width="1.15"/><circle cx="109.4" cy="92.4" r="3.85" fill="#f4a884" stroke="#101010" stroke-width="1.15"/><circle cx="-0.9" cy="82.0" r="3.85" fill="#c88a58" stroke="#101010" stroke-width="1.15"/></svg></div>
<div class="b" style="left:1330px;top:542px;width:241px;height:26px;background:#333"></div>
<div class="t" style="top:546.7px;font-size:17.5px;line-height:17.5px;color:#f0f0f0;letter-spacing:0.52px;left:1333.0px;">RGB Triplet: 217, 140, 94</div>
<!-- table_panel -->
<div class="tb"><div class="hd" style="top:0"><span style="left:111px">White</span><span style="left:161px">Gray 80</span><span style="left:213px">Gray 65</span><span style="left:264px">Gray 50</span><span style="left:316px">Gray 35</span><span style="left:367px">Black</span><span style="left:409px">Dark Skin</span><span style="left:471px">Light Skin</span><span style="left:533px">Blue Sky</span><span style="left:588px">Foliage</span><span style="left:637px">Blue Flower</span><span style="left:712px">Bluish Green</span><span style="left:792px">Orange</span><span style="left:843px">Purplish Blue</span><span style="left:925px">Moderate Red</span><span style="left:1015px">Purple</span><span style="left:1060px">Yellow Green</span><span style="left:1143px">Orange Yellow</span><span style="left:1233px">Blue</span><span style="left:1275px">Green</span><span style="left:1317px">Red</span><span style="left:1360px">Yellow</span><span style="left:1410px">Magenta</span><span style="left:1469px">Cyan</span><span style="left:1511px">100% Red</span><span style="left:1575px">100% Green</span><span style="left:1653px">100% Blue</span><span style="left:1720px">100% Cyan</span><span style="left:1791px">100% Magenta</span><span style="left:1885px">100% Yellow</span></div><div class="ra" style="top:24px;height:22px;line-height:25.6px"><span style="left:15px">x: CIE31</span><span style="left:111px">0,31</span><span style="left:161px">0,31</span><span style="left:213px">0,31</span><span style="left:264px">0,31</span><span style="left:316px">0,31</span><span style="left:367px">0,26</span><span style="left:409px">0,41</span><span style="left:471px">0,38</span><span style="left:533px">0,25</span><span style="left:588px">0,34</span><span style="left:637px">0,27</span><span style="left:712px">0,26</span><span style="left:792px">0,52</span><span style="left:843px">0,21</span><span style="left:925px">0,47</span><span style="left:1015px">0,29</span><span style="left:1060px">0,38</span><span style="left:1143px">0,48</span><span style="left:1233px">0,18</span><span style="left:1275px">0,31</span><span style="left:1317px">0,55</span><span style="left:1360px">0,45</span><span style="left:1410px">0,38</span><span style="left:1469px">0,20</span><span style="left:1511px">0,65</span><span style="left:1575px">0,30</span><span style="left:1653px">0,14</span><span style="left:1720px">0,22</span><span style="left:1791px">0,32</span><span style="left:1885px">0,42</span></div><div class="rb" style="top:46px;height:23px;line-height:25.6px"><span style="left:15px">y: CIE31</span><span style="left:111px">0,33</span><span style="left:161px">0,33</span><span style="left:213px">0,33</span><span style="left:264px">0,33</span><span style="left:316px">0,33</span><span style="left:367px">0,27</span><span style="left:409px">0,37</span><span style="left:471px">0,36</span><span style="left:533px">0,26</span><span style="left:588px">0,43</span><span style="left:637px">0,25</span><span style="left:712px">0,36</span><span style="left:792px">0,41</span><span style="left:843px">0,19</span><span style="left:925px">0,31</span><span style="left:1015px">0,22</span><span style="left:1060px">0,49</span><span style="left:1143px">0,44</span><span style="left:1233px">0,14</span><span style="left:1275px">0,49</span><span style="left:1317px">0,32</span><span style="left:1360px">0,47</span><span style="left:1410px">0,25</span><span style="left:1469px">0,27</span><span style="left:1511px">0,33</span><span style="left:1575px">0,60</span><span style="left:1653px">0,07</span><span style="left:1720px">0,33</span><span style="left:1791px">0,16</span><span style="left:1885px">0,50</span></div><div class="ra" style="top:69px;height:22px;line-height:25.6px"><span style="left:15px">Y</span><span style="left:111px">363,95</span><span style="left:161px">289,19</span><span style="left:213px">236,34</span><span style="left:264px">181,24</span><span style="left:316px">126,46</span><span style="left:367px">0,30</span><span style="left:409px">36,47</span><span style="left:471px">129,80</span><span style="left:533px">68,93</span><span style="left:588px">47,13</span><span style="left:637px">87,55</span><span style="left:712px">153,40</span><span style="left:792px">104,52</span><span style="left:843px">43,57</span><span style="left:925px">69,32</span><span style="left:1015px">23,82</span><span style="left:1060px">156,08</span><span style="left:1143px">156,27</span><span style="left:1233px">22,54</span><span style="left:1275px">84,05</span><span style="left:1317px">42,91</span><span style="left:1360px">217,02</span><span style="left:1410px">70,44</span><span style="left:1469px">72,32</span><span style="left:1511px">78,96</span><span style="left:1575px">255,95</span><span style="left:1653px">28,79</span><span style="left:1720px">284,21</span><span style="left:1791px">107,62</span><span style="left:1885px">335,41</span></div><div class="rb" style="top:91px;height:22px;line-height:25.6px"><span style="left:15px">Target x:CIE31</span><span style="left:111px">0,31</span><span style="left:161px">0,31</span><span style="left:213px">0,31</span><span style="left:264px">0,31</span><span style="left:316px">0,31</span><span style="left:367px">0,31</span><span style="left:409px">0,40</span><span style="left:471px">0,38</span><span style="left:533px">0,25</span><span style="left:588px">0,34</span><span style="left:637px">0,27</span><span style="left:712px">0,26</span><span style="left:792px">0,51</span><span style="left:843px">0,22</span><span style="left:925px">0,46</span><span style="left:1015px">0,29</span><span style="left:1060px">0,38</span><span style="left:1143px">0,47</span><span style="left:1233px">0,19</span><span style="left:1275px">0,31</span><span style="left:1317px">0,54</span><span style="left:1360px">0,45</span><span style="left:1410px">0,37</span><span style="left:1469px">0,21</span><span style="left:1511px">0,64</span><span style="left:1575px">0,30</span><span style="left:1653px">0,15</span><span style="left:1720px">0,22</span><span style="left:1791px">0,32</span><span style="left:1885px">0,42</span></div><div class="ra" style="top:113px;height:22px;line-height:25.6px"><span style="left:15px">Target y:CIE31</span><span style="left:111px">0,33</span><span style="left:161px">0,33</span><span style="left:213px">0,33</span><span style="left:264px">0,33</span><span style="left:316px">0,33</span><span style="left:367px">0,33</span><span style="left:409px">0,36</span><span style="left:471px">0,36</span><span style="left:533px">0,27</span><span style="left:588px">0,43</span><span style="left:637px">0,25</span><span style="left:712px">0,36</span><span style="left:792px">0,41</span><span style="left:843px">0,19</span><span style="left:925px">0,31</span><span style="left:1015px">0,22</span><span style="left:1060px">0,49</span><span style="left:1143px">0,44</span><span style="left:1233px">0,14</span><span style="left:1275px">0,49</span><span style="left:1317px">0,32</span><span style="left:1360px">0,47</span><span style="left:1410px">0,25</span><span style="left:1469px">0,27</span><span style="left:1511px">0,33</span><span style="left:1575px">0,60</span><span style="left:1653px">0,06</span><span style="left:1720px">0,33</span><span style="left:1791px">0,15</span><span style="left:1885px">0,51</span></div><div class="rb" style="top:135px;height:22px;line-height:25.6px"><span style="left:15px">Target Y</span><span style="left:111px">363,95</span><span style="left:161px">287,99</span><span style="left:213px">232,05</span><span style="left:264px">178,71</span><span style="left:316px">124,44</span><span style="left:367px">0,00</span><span style="left:409px">36,66</span><span style="left:471px">127,00</span><span style="left:533px">68,05</span><span style="left:588px">47,43</span><span style="left:637px">84,87</span><span style="left:712px">152,40</span><span style="left:792px">103,17</span><span style="left:843px">42,78</span><span style="left:925px">67,97</span><span style="left:1015px">24,29</span><span style="left:1060px">155,61</span><span style="left:1143px">154,73</span><span style="left:1233px">22,72</span><span style="left:1275px">83,61</span><span style="left:1317px">42,44</span><span style="left:1360px">214,60</span><span style="left:1410px">68,52</span><span style="left:1469px">70,67</span><span style="left:1511px">77,40</span><span style="left:1575px">260,28</span><span style="left:1653px">26,27</span><span style="left:1720px">286,55</span><span style="left:1791px">103,67</span><span style="left:1885px">337,68</span></div><div class="ra" style="top:157px;height:22px;line-height:25.6px"><span style="left:15px">ΔE 2000</span><span style="left:111px">0,48</span><span style="left:161px">0,11</span><span style="left:213px">0,51</span><span style="left:264px">0,56</span><span style="left:316px">0,56</span><span style="left:367px">0,86</span><span style="left:409px">0,86</span><span style="left:471px">0,73</span><span style="left:533px">1,13</span><span style="left:588px">0,80</span><span style="left:637px">1,30</span><span style="left:712px">0,47</span><span style="left:792px">1,23</span><span style="left:843px">1,99</span><span style="left:925px">0,86</span><span style="left:1015px">0,34</span><span style="left:1060px">1,15</span><span style="left:1143px">1,05</span><span style="left:1233px">1,95</span><span style="left:1275px">0,37</span><span style="left:1317px">1,42</span><span style="left:1360px">1,52</span><span style="left:1410px">0,65</span><span style="left:1469px">1,21</span><span style="left:1511px">1,83</span><span style="left:1575px">0,39</span><span style="left:1653px">3,55</span><span style="left:1720px">0,71</span><span style="left:1791px">1,03</span><span style="left:1885px">1,25</span></div><div class="rb" style="top:179px;height:24px;line-height:25.6px"><span style="left:15px">dEITP</span><span style="left:111px">0,36</span><span style="left:161px">0,32</span><span style="left:213px">1,41</span><span style="left:264px">1,12</span><span style="left:316px">1,25</span><span style="left:367px">70,90</span><span style="left:409px">3,50</span><span style="left:471px">2,04</span><span style="left:533px">2,73</span><span style="left:588px">2,46</span><span style="left:637px">3,08</span><span style="left:712px">1,35</span><span style="left:792px">7,29</span><span style="left:843px">6,22</span><span style="left:925px">4,09</span><span style="left:1015px">1,50</span><span style="left:1060px">3,33</span><span style="left:1143px">5,31</span><span style="left:1233px">10,62</span><span style="left:1275px">1,44</span><span style="left:1317px">9,79</span><span style="left:1360px">5,51</span><span style="left:1410px">2,07</span><span style="left:1469px">4,01</span><span style="left:1511px">7,43</span><span style="left:1575px">1,29</span><span style="left:1653px">16,51</span><span style="left:1720px">2,83</span><span style="left:1791px">5,79</span><span style="left:1885px">3,15</span></div></div>
<div class="b" style="left:300px;top:620px;width:8px;height:24px;background:#000"></div>
<div class="b" style="left:300px;top:644px;width:8px;height:179px;background:linear-gradient(90deg,#151515,#2c2c2c)"></div>
<div class="b" style="left:308px;top:823px;width:1275px;height:13px;background:#5f5f5f;overflow:hidden"><div class="b" style="left:10.4px;top:1.2px;width:884px;height:11.600px;background:#444;border-radius:6px"></div><div class="b" style="left:0;top:1px;width:8px;height:12px;background:#8a8a8a;border-radius:2px"></div><svg style="left:1px;top:3px" width="6" height="8"><path d="M5 0v8L.5 4z" fill="#181818"/></svg><div class="b" style="left:1267px;top:1px;width:8px;height:12px;background:#8a8a8a;border-radius:2px"></div><svg style="left:1269px;top:3px" width="6" height="8"><path d="M1 0v8L5.500 4z" fill="#181818"/></svg></div>
<!-- bottom_panel -->
<div class="bs" style="background:#2c2c2c"><div class="bt" style="left:-6px"><i class="" style="background:#ffffff"></i><b style="top:34px">White</b></div><div class="bt" style="left:46px"><i class="" style="background:#e6e6e6"></i><b style="top:34px">Gray 80</b></div><div class="bt" style="left:98px"><i class="" style="background:#d2d2d2"></i><b style="top:34px">Gray 65</b></div><div class="bt" style="left:150px"><i class="" style="background:#bbbbbb"></i><b style="top:34px">Gray 50</b></div><div class="bt" style="left:202px"><i class="" style="background:#a0a0a0"></i><b style="top:34px">Gray 35</b></div><div class="bt" style="left:254px"><i class="" style="background:#000000"></i><b style="top:34px">Black</b></div><div class="bt" style="left:306px"><i class="" style="background:#745244"></i><b style="top:34px">Dark Skin</b></div><div class="bt" style="left:358px"><i class="" style="background:#c69682"></i><b style="top:34px">Light Skin</b></div><div class="bt" style="left:410px"><i class="" style="background:#5f7ba0"></i><b style="top:34px">Blue Sky</b></div><div class="bt" style="left:462px"><i class="" style="background:#566c40"></i><b style="top:34px">Foliage</b></div><div class="bt" style="left:514px"><i class="s" style="background:#8580b4"></i><b style="top:22px">Blue<br>Flower</b></div><div class="bt" style="left:566px"><i class="s" style="background:#62bfac"></i><b style="top:22px">Bluish<br>Green</b></div><div class="bt" style="left:618px"><i class="" style="background:#e07f2e"></i><b style="top:34px">Orange</b></div><div class="bt" style="left:670px"><i class="s" style="background:#4a5cae"></i><b style="top:22px">Purplish<br>Blue</b></div><div class="bt" style="left:722px"><i class="s" style="background:#c85466"></i><b style="top:22px">Moderate<br>Red</b></div><div class="bt" style="left:774px"><i class="" style="background:#5c3c6e"></i><b style="top:34px">Purple</b></div><div class="bt" style="left:826px"><i class="s" style="background:#a2c040"></i><b style="top:22px">Yellow<br>Green</b></div><div class="bt" style="left:878px"><i class="s" style="background:#eaa22a"></i><b style="top:22px">Orange<br>Yellow</b></div><div class="bt" style="left:930px"><i class="" style="background:#2e3c9c"></i><b style="top:34px">Blue</b></div><div class="bt" style="left:982px"><i class="" style="background:#429446"></i><b style="top:34px">Green</b></div><div class="bt" style="left:1034px"><i class="" style="background:#b0303a"></i><b style="top:34px">Red</b></div><div class="bt" style="left:1086px"><i class="" style="background:#eec81e"></i><b style="top:34px">Yellow</b></div><div class="bt" style="left:1138px"><i class="" style="background:#c0549a"></i><b style="top:34px">Magenta</b></div><div class="bt" style="left:1190px"><i class="" style="background:#0a8cb0"></i><b style="top:34px">Cyan</b></div><div class="bt" style="left:1242px"><i class="" style="background:#ff0000"></i><b style="top:34px">100% Red</b></div></div>
<div class="b" style="left:0px;top:951px;width:1261px;height:10px;background:#5c5c5c;overflow:hidden"><div class="b" style="left:7.5px;top:1px;width:641px;height:12px;background:#474747;border-radius:6px"></div><div class="b" style="left:0;top:1px;width:5px;height:10px;background:#8a8a8a"></div><svg style="left:0;top:2px" width="5" height="8"><path d="M4.500 0v8L0 4z" fill="#181818"/></svg><div class="b" style="left:1253px;top:1px;width:8px;height:10px;background:#8a8a8a;border-radius:2px 0 0 2px"></div><svg style="left:1255px;top:2px" width="6" height="8"><path d="M1 0v8L5.500 4z" fill="#181818"/></svg></div>
<div class="cb cl" style="left:1262px;top:902px;width:48px;height:18px;border-radius:4px 4px 0 0"></div>
<div class="ic" style="left:1277px;top:903px;width:18px;height:16px;background:linear-gradient(#7e7e7e,#9a9a9a)"></div>
<svg style="left:1281px;top:907px" width="10" height="6"><path d="M5 .5L9.5 5.5H.5z" fill="#3a3a3a"/></svg>
<div class="cb" style="left:1262px;top:921px;width:48px;height:40px;background:linear-gradient(#8e8e8e,#7c7c7c 50%,#626262)"></div>
<div class="cb" style="left:1270px;top:926px;width:32px;height:32px;border:2px solid #2a2a2a;border-radius:4px;background:linear-gradient(#b8b8b8,#a8a8a8 50%,#8a8a8a 52%,#808080)"></div>
<div class="cb" style="left:1279px;top:934.5px;width:14px;height:14px;background:linear-gradient(#2b2b2b 0 50%,#000 50%)"></div>
<div class="cb cl" style="left:1311px;top:902px;width:47px;height:30px;border-radius:4px 0 0 0"></div>
<div class="ic" style="left:1324.5px;top:907px;width:20px;height:20px;background:linear-gradient(#7c7c7c,#8a8a8a 45%,#9c9c9c)"></div>
<div class="cb cl" style="left:1358px;top:902px;width:45px;height:30px"></div>
<div class="ic" style="left:1370.5px;top:907px;width:20px;height:20px;background:linear-gradient(#7c7c7c,#8a8a8a 45%,#9c9c9c)"></div>
<div class="cb cl" style="left:1403px;top:902px;width:44px;height:30px"></div>
<div class="ic" style="left:1415.0px;top:907px;width:20px;height:20px;background:linear-gradient(#7c7c7c,#8a8a8a 45%,#9c9c9c)"></div>
<div class="cb cl" style="left:1447px;top:902px;width:46px;height:30px"></div>
<div class="ic" style="left:1460.0px;top:907px;width:20px;height:20px;background:linear-gradient(#7c7c7c,#8a8a8a 45%,#9c9c9c)"></div>
<div class="cb cd" style="left:1493px;top:902px;width:44px;height:30px"></div>
<div class="ic" style="left:1505.0px;top:907px;width:20px;height:20px;background:linear-gradient(#2a2a2a,#323232)"></div>
<div class="cb cd" style="left:1537px;top:902px;width:46px;height:30px"></div>
<div class="ic" style="left:1550.0px;top:907px;width:20px;height:20px;background:linear-gradient(#2a2a2a,#323232)"></div>
<svg width="1583" height="961" style="left:0;top:0"><rect x="1329.5" y="912.5" width="9" height="9" fill="#333"/><path d="M1377 912v10l8-5z" fill="#2c2c2c"/><path d="M1422.600 912.300h-2.800v9.400h2.800M1428.400 912.300h2.800v9.400h-2.800" fill="none" stroke="#2c2c2c" stroke-width="2"/><rect x="1422.700" y="916" width="1.800" height="2" fill="#2c2c2c"/><rect x="1426.500" y="916" width="1.800" height="2" fill="#2c2c2c"/><path d="M1470 917c-1.6-2.6-5.6-2.6-5.6 0s4 2.600 5.600 0s5.600-2.600 5.600 0s-4 2.600-5.600 0z" fill="none" stroke="#333" stroke-width="1.5"/><path d="M1510.200 915.500a5 5 0 0 1 9.200-1.300M1519.800 918.500a5 5 0 0 1-9.200 1.300" fill="none" stroke="#1c1c1c" stroke-width="2.2"/><path d="M1521 911v4.200h-4.200zM1509 923v-4.200h4.200z" fill="#1c1c1c"/></svg>
<div class="cb" style="left:1311px;top:933px;width:136px;height:28px;border-radius:5px 0 0 0;background:linear-gradient(#a8a8a8,#8e8e8e 45%,#727272);box-shadow:inset 1px 1px 0 #bcbcbc,inset -1px 0 0 #555"></div>
<div class="cb" style="left:1447px;top:933px;width:136px;height:28px;background:linear-gradient(#a8a8a8,#8e8e8e 45%,#727272);box-shadow:inset 1px 1px 0 #bcbcbc"></div>
<div class="ic" style="left:1332px;top:938px;width:20px;height:20px;background:linear-gradient(#868686,#949494 45%,#acacac)"></div>
<div class="ic" style="left:1546px;top:938px;width:20px;height:20px;background:linear-gradient(#868686,#949494 45%,#acacac)"></div>
<svg width="1583" height="961" style="left:0;top:0"><path d="M1341.500 943.500l-3.800 4.500 3.800 4.500M1346.500 943.500l-3.800 4.500 3.800 4.500M1551.500 943.500l3.800 4.500-3.800 4.500M1556.500 943.500l3.800 4.500-3.800 4.500" fill="none" stroke="#383838" stroke-width="1.3"/></svg>
<div class="t" style="top:936.7px;font-size:23px;line-height:23px;color:#2c2c2c;letter-spacing:-0.21px;left:1368.5px;-webkit-text-stroke:.55px #2c2c2c;">Back</div>
<div class="t" style="top:936.7px;font-size:23px;line-height:23px;color:#2c2c2c;letter-spacing:1.4px;left:1475.5px;-webkit-text-stroke:.55px #2c2c2c;">Next</div></body></html>
